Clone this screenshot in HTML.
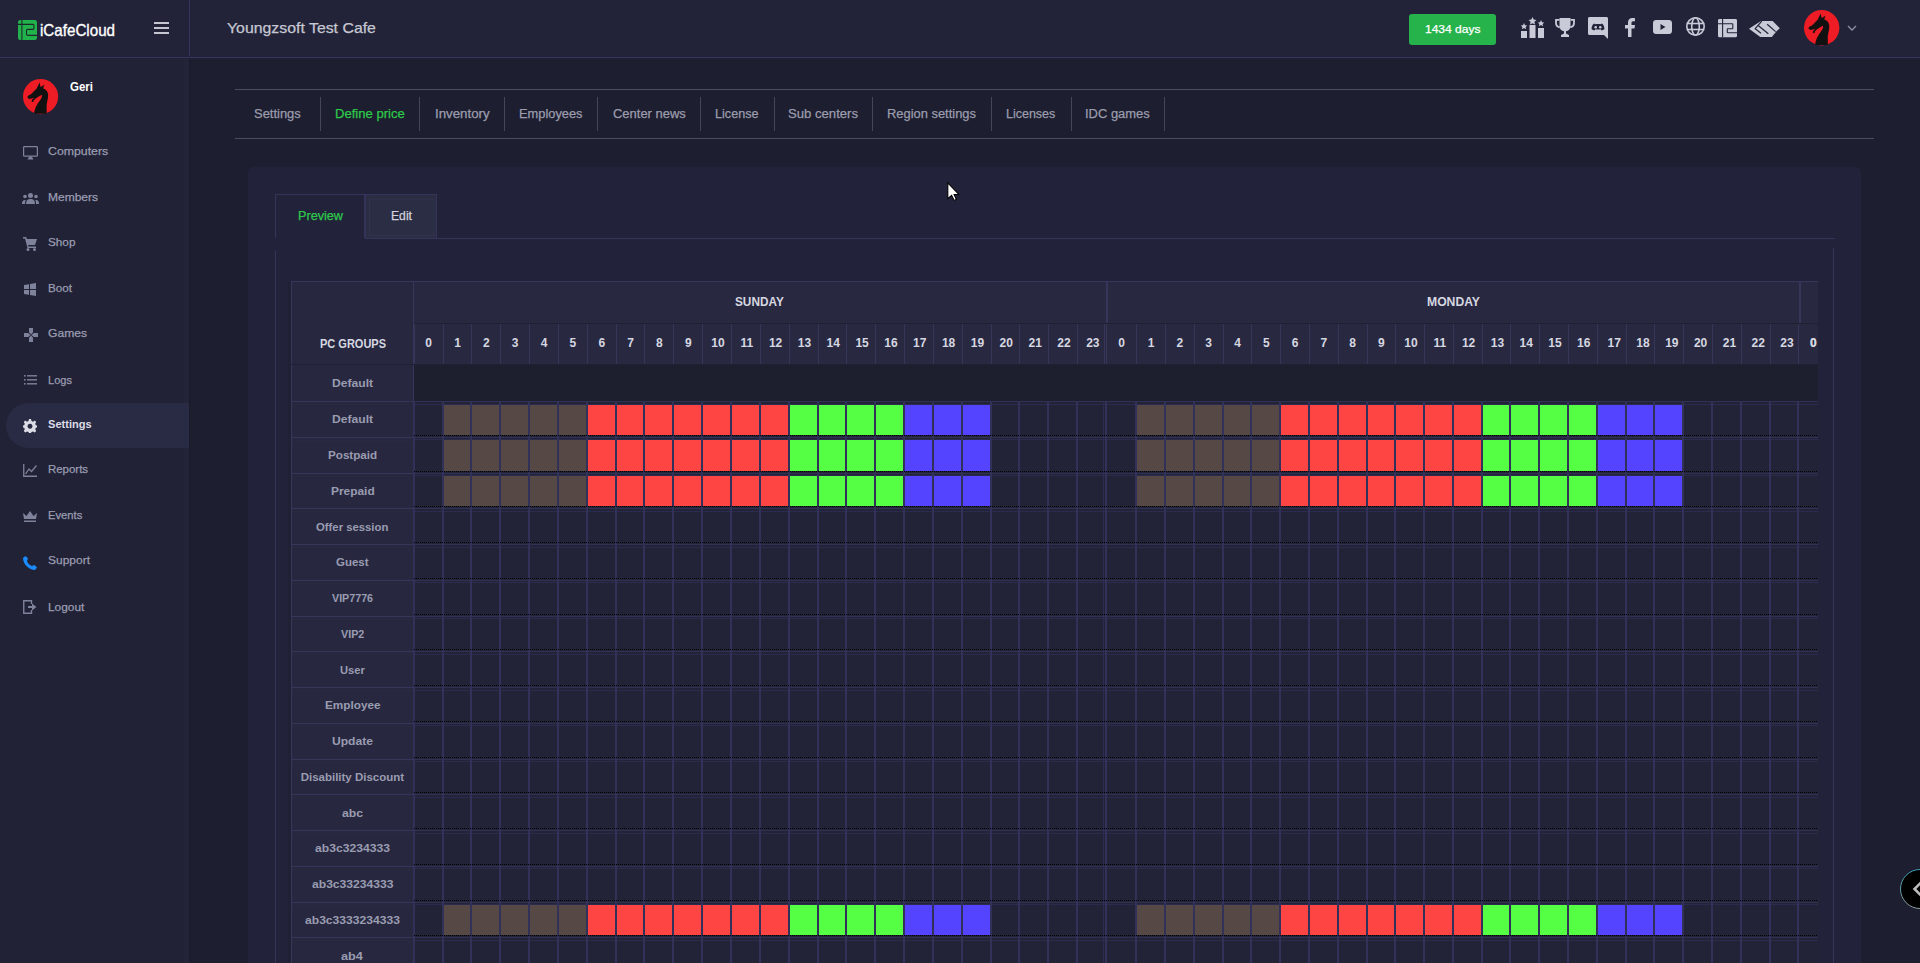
<!DOCTYPE html><html><head><meta charset="utf-8"><title>iCafeCloud</title><style>
html,body{margin:0;padding:0}
body{width:1920px;height:963px;overflow:hidden;background:#1d1e2f;position:relative;font-family:"Liberation Sans",sans-serif}
.t{position:absolute;white-space:nowrap;transform-origin:0 0}
.s{-webkit-text-stroke:0.25px currentColor}
.r{position:absolute}
svg{position:absolute;overflow:visible}
</style></head><body>
<div class="r" style="left:0px;top:58px;width:189px;height:905px;background:#212236;"></div>
<div class="r" style="left:184px;top:58px;width:5px;height:905px;background:#232437;"></div>
<div class="r" style="left:189px;top:58px;width:3px;height:905px;background:linear-gradient(90deg,#1a1b2a,#1d1e2f);"></div>
<svg style="left:23.299999999999997px;top:78.80000000000001px" width="35.2" height="35.2" viewBox="0 0 35 35"><circle cx="17.5" cy="17.5" r="17.5" fill="#ee1c24"/>
<path fill="#111" d="M16.5 3.5 L17.5 8 L21.3 5.6 L20 9.1 C22.6 10 24.6 12 25 15.5 C25.3 19 23.8 22.5 23.5 26 C23.3 29 23.9 32 23.4 34.6 L11 34.6 C11.3 30 13.5 25.5 16.8 21.3 C18.4 19.3 19.2 17.5 18.8 15.6 L15.6 17.4 L12.6 19.4 L10.5 21.4 L10.4 23 L8.6 22.6 L8.9 20.7 L11.3 18.6 L8.6 19.4 L6.2 19.8 L4.5 18.6 L4.8 16.9 L8.2 15 L11.1 12 L13.6 9.4 Z"/></svg>
<div class="t" style="left:70.00px;top:79.57px;font-size:13.5px;line-height:13.5px;font-weight:bold;color:#ffffff;transform:scaleX(0.8519);">Geri</div>
<div class="r" style="left:6px;top:403px;width:183px;height:45px;background:#292a44;border-radius:23px 0 0 23px"></div>
<div class="t s" style="left:48.00px;top:146.07px;font-size:11.5px;line-height:11.5px;font-weight:normal;color:#9a9cb1;transform:scaleX(1.0705);">Computers</div>
<div class="t s" style="left:48.00px;top:192.07px;font-size:11.5px;line-height:11.5px;font-weight:normal;color:#9a9cb1;transform:scaleX(1.0426);">Members</div>
<div class="t s" style="left:48.00px;top:237.07px;font-size:11.5px;line-height:11.5px;font-weight:normal;color:#9a9cb1;transform:scaleX(1.0204);">Shop</div>
<div class="t s" style="left:48.00px;top:283.07px;font-size:11.5px;line-height:11.5px;font-weight:normal;color:#9a9cb1;transform:scaleX(1.0156);">Boot</div>
<div class="t s" style="left:48.00px;top:328.07px;font-size:11.5px;line-height:11.5px;font-weight:normal;color:#9a9cb1;transform:scaleX(1.0516);">Games</div>
<div class="t s" style="left:48.00px;top:374.87px;font-size:11.5px;line-height:11.5px;font-weight:normal;color:#9a9cb1;transform:scaleX(0.9617);">Logs</div>
<div class="t" style="left:48.00px;top:419.37px;font-size:11.5px;line-height:11.5px;font-weight:bold;color:#dcdde6;transform:scaleX(0.9632);">Settings</div>
<div class="t s" style="left:48.00px;top:464.47px;font-size:11.5px;line-height:11.5px;font-weight:normal;color:#9a9cb1;transform:scaleX(0.9938);">Reports</div>
<div class="t s" style="left:48.00px;top:510.37px;font-size:11.5px;line-height:11.5px;font-weight:normal;color:#9a9cb1;transform:scaleX(0.9763);">Events</div>
<div class="t s" style="left:48.00px;top:555.47px;font-size:11.5px;line-height:11.5px;font-weight:normal;color:#9a9cb1;transform:scaleX(1.0420);">Support</div>
<div class="t s" style="left:48.00px;top:601.67px;font-size:11.5px;line-height:11.5px;font-weight:normal;color:#9a9cb1;transform:scaleX(1.0315);">Logout</div>
<svg style="left:23px;top:146px" width="15" height="14" viewBox="0 0 15 14" fill="#7f829b"><rect x="0.6" y="0.6" width="13.8" height="9.6" rx="0.8" fill="none" stroke="#7f829b" stroke-width="1.2"/><path d="M6.3 10.5 L8.7 10.5 L10.5 13.5 L4.5 13.5Z"/></svg>
<svg style="left:22px;top:193px" width="17" height="11" viewBox="0 0 17 11" fill="#7f829b"><circle cx="8.5" cy="2.5" r="2.5"/><circle cx="3" cy="3.5" r="1.8"/><circle cx="14" cy="3.5" r="1.8"/><path d="M4 11 C4 7 6 6 8.5 6 C11 6 13 7 13 11Z"/><path d="M0 11 C0 8 1 7 3 7 L4 7 C3 8 3 9 3 11Z"/><path d="M17 11 C17 8 16 7 14 7 L13 7 C14 8 14 9 14 11Z"/></svg>
<svg style="left:23px;top:237px" width="14" height="14" viewBox="0 0 14 14" fill="#7f829b"><path d="M0 0 L3 0 L4 2 L14 2 L12 8 L5 8 L5.5 9.5 L13 9.5 L13 11 L4.5 11 L2 1.5 L0 1.5Z"/><circle cx="5" cy="12.5" r="1.5"/><circle cx="11.5" cy="12.5" r="1.5"/></svg>
<svg style="left:24px;top:283px" width="12" height="13" viewBox="0 0 12 13" fill="#7f829b"><path d="M0 2 L5 1.2 L5 6 L0 6Z M6 1 L12 0 L12 6 L6 6Z M0 7 L5 7 L5 11.8 L0 11Z M6 7 L12 7 L12 13 L6 12Z"/></svg>
<svg style="left:23.6px;top:328px" width="14" height="14" viewBox="0 0 14 14" fill="#7f829b"><path d="M5 0 H9 V4.2 L7 6.6 L5 4.2Z M14 5 V9 H9.8 L7.4 7 L9.8 5Z M0 5 H4.2 L6.6 7 L4.2 9 H0Z M5 14 V9.8 L7 7.4 L9 9.8 V14Z"/></svg>
<svg style="left:24px;top:375px" width="13" height="10" viewBox="0 0 13 10" fill="#7f829b"><rect x="0" y="0" width="1.6" height="1.6"/><rect x="3" y="0.1" width="10" height="1.4"/><rect x="0" y="4" width="1.6" height="1.6"/><rect x="3" y="4.1" width="10" height="1.4"/><rect x="0" y="8" width="1.6" height="1.6"/><rect x="3" y="8.1" width="10" height="1.4"/></svg>
<svg style="left:23px;top:419px" width="14" height="14" viewBox="0 0 14 14" fill="#dcdde6"><path fill-rule="evenodd" d="M6 0 L8 0 L8.5 2 L10 2.7 L11.8 1.6 L13.2 3 L12.2 4.8 L12.8 6.2 L14 6.5 L14 8.5 L12.8 8.8 L12.2 10.2 L13.2 12 L11.8 13.4 L10 12.4 L8.5 13 L8 14 L6 14 L5.5 13 L4 12.4 L2.2 13.4 L0.8 12 L1.8 10.2 L1.2 8.8 L0 8.5 L0 6.5 L1.2 6.2 L1.8 4.8 L0.8 3 L2.2 1.6 L4 2.7 L5.5 2Z M7 4.8 A2.5 2.5 0 1 0 7.01 4.8Z"/></svg>
<svg style="left:23px;top:464px" width="14" height="13" viewBox="0 0 14 13" fill="#7f829b"><path d="M0.75 0 L0.75 12.25 L14 12.25" fill="none" stroke="#7f829b" stroke-width="1.3"/><path d="M2.5 10 L6 5 L8.5 7.5 L13.5 1.5" fill="none" stroke="#7f829b" stroke-width="1.3"/></svg>
<svg style="left:23px;top:511px" width="14" height="12" viewBox="0 0 14 12" fill="#7f829b"><path d="M0 2 L3.5 5 L7 0 L10.5 5 L14 2 L13 8 L1 8Z"/><rect x="1" y="9.5" width="12" height="1.5"/></svg>
<svg style="left:23px;top:556px" width="14" height="14" viewBox="0 0 14 14" fill="#1a8cff"><path d="M2.5 0 L5 2.5 L4 5 C4.5 7 6.5 9.5 9 10 L11.5 9 L14 11.5 L12 14 C6 14 0 8 0 2Z"/></svg>
<svg style="left:23px;top:600px" width="14" height="14" viewBox="0 0 14 14" fill="#7f829b"><path d="M8.5 4 L8.5 0.75 L0.75 0.75 L0.75 13.25 L8.5 13.25 L8.5 10" fill="none" stroke="#7f829b" stroke-width="1.4"/><path d="M5 6 L9 6 L9 3.5 L13.5 7 L9 10.5 L9 8 L5 8Z"/></svg>
<div class="r" style="left:0px;top:0px;width:1920px;height:57px;background:#222338;"></div>
<div class="r" style="left:0px;top:57px;width:1920px;height:1px;background:#35345a;"></div>
<div class="r" style="left:189px;top:0px;width:1px;height:56px;background:#363560;"></div>
<div class="r" style="left:0px;top:58px;width:1920px;height:1px;background:#1f2031;"></div>
<div class="r" style="left:0px;top:59px;width:189px;height:1px;background:#24243b;"></div>
<div class="r" style="left:189px;top:59px;width:1731px;height:1px;background:#1e1e34;"></div>
<svg style="left:18px;top:20px" width="19" height="20" viewBox="0 0 19 20"><rect width="19" height="20" rx="2.2" fill="#22b24c"/>
<g fill="none" stroke="#1d2a2a" stroke-width="1.1"><line x1="3.9" y1="0" x2="3.9" y2="20"/><path d="M0 4.4 H15 Q16 4.4 16 5.6 V8.2 Q16 9.4 15 9.4 H9.6 Q8.5 9.4 8.5 10.6 V14.2 Q8.5 15.4 9.8 15.4 H19"/></g></svg>
<div class="t s" style="left:40.00px;top:22.03px;font-size:16.5px;line-height:16.5px;font-weight:normal;color:#ffffff;transform:scaleX(0.9192);-webkit-text-stroke:0.35px #fff;">iCafeCloud</div>
<div class="r" style="left:154px;top:22px;width:15px;height:2px;background:#c4c5d0;"></div>
<div class="r" style="left:154px;top:27px;width:15px;height:2px;background:#c4c5d0;"></div>
<div class="r" style="left:154px;top:32px;width:15px;height:2px;background:#c4c5d0;"></div>
<div class="t s" style="left:226.60px;top:19.56px;font-size:15.4px;line-height:15.4px;font-weight:normal;color:#c6c7d2;transform:scaleX(1.0298);">Youngzsoft Test Cafe</div>
<div class="r" style="left:1409px;top:14px;width:87px;height:31px;background:#26b34b;border-radius:3px"></div>
<div class="t s" style="left:1424.50px;top:24.43px;font-size:11.3px;line-height:11.3px;font-weight:normal;color:#ffffff;transform:scaleX(1.0642);">1434 days</div>
<svg style="left:1521px;top:17px" width="23" height="21" viewBox="0 0 23 21" fill="#c9cad8"><rect x="0" y="14" width="6" height="7"/><rect x="8.5" y="8" width="6" height="13"/><rect x="17" y="11" width="6" height="10"/><path d="M11.5 0 L12.7 2.6 L15.5 2.9 L13.4 4.8 L14 7.6 L11.5 6.2 L9 7.6 L9.6 4.8 L7.5 2.9 L10.3 2.6Z"/><path d="M3 6 L4 8.2 L6.3 8.4 L4.6 10 L5.1 12.3 L3 11.1 L0.9 12.3 L1.4 10 L-0.3 8.4 L2 8.2Z"/><path d="M20 3 L21 5.2 L23.3 5.4 L21.6 7 L22.1 9.3 L20 8.1 L17.9 9.3 L18.4 7 L16.7 5.4 L19 5.2Z"/></svg>
<svg style="left:1555px;top:18px" width="20" height="19" viewBox="0 0 20 19" fill="#c9cad8"><path d="M4.5 0 L15.5 0 L15.5 8 C15.5 11 13.5 13 11 13.3 L11 15.5 L14 17 L14 19 L6 19 L6 17 L9 15.5 L9 13.3 C6.5 13 4.5 11 4.5 8Z"/><path d="M4.5 1.8 L1 1.8 L1 5 C1 7.5 3 9 4.8 9.3" fill="none" stroke="#c9cad8" stroke-width="1.8"/><path d="M15.5 1.8 L19 1.8 L19 5 C19 7.5 17 9 15.2 9.3" fill="none" stroke="#c9cad8" stroke-width="1.8"/></svg>
<svg style="left:1588px;top:17px" width="20" height="22" viewBox="0 0 20 22" fill="#c9cad8"><path fill-rule="evenodd" d="M1.5 0 L18.5 0 C19.3 0 20 0.7 20 1.5 L20 22 L16 18 L1.5 18 C0.7 18 0 17.3 0 16.5 L0 1.5 C0 0.7 0.7 0 1.5 0Z M6.5 6.5 C5 7 4 8 3.5 12 C4.5 13 6 13.5 6.7 13.3 L7.3 12.3 C8.5 12.7 11.5 12.7 12.7 12.3 L13.3 13.3 C14 13.5 15.5 13 16.5 12 C16 8 15 7 13.5 6.5 L13 7.2 C11 6.8 9 6.8 7 7.2Z"/><circle cx="7.7" cy="10.2" r="1.3" fill="#c9cad8"/><circle cx="12.3" cy="10.2" r="1.3" fill="#c9cad8"/></svg>
<svg style="left:1625px;top:18px" width="10" height="19" viewBox="0 0 10 19" fill="#c9cad8"><path d="M6.5 19 L6.5 10.5 L9.5 10.5 L10 7 L6.5 7 L6.5 5 C6.5 4 7 3.3 8.3 3.3 L10 3.3 L10 0.2 C9.5 0.1 8.5 0 7.3 0 C4.7 0 3 1.6 3 4.4 L3 7 L0 7 L0 10.5 L3 10.5 L3 19Z"/></svg>
<svg style="left:1653px;top:20px" width="19" height="14" viewBox="0 0 19 14" fill="#c9cad8"><path fill-rule="evenodd" d="M3 0 L16 0 C17.7 0 19 1.3 19 3 L19 11 C19 12.7 17.7 14 16 14 L3 14 C1.3 14 0 12.7 0 11 L0 3 C0 1.3 1.3 0 3 0Z M7.5 4 L7.5 10 L12.5 7Z"/></svg>
<svg style="left:1686px;top:17px" width="19" height="19" viewBox="0 0 19 19" fill="#c9cad8"><g fill="none" stroke="#c9cad8" stroke-width="1.6"><circle cx="9.5" cy="9.5" r="8.7"/><ellipse cx="9.5" cy="9.5" rx="3.8" ry="8.7"/><line x1="0.8" y1="6.5" x2="18.2" y2="6.5"/><line x1="0.8" y1="12.5" x2="18.2" y2="12.5"/></g></svg>
<svg style="left:1718px;top:19px" width="19" height="18.3" viewBox="0 0 19 18.3"><rect width="19" height="18.3" rx="1.5" fill="#c9cad8"/>
<g fill="none" stroke="#222338" stroke-width="1.1"><line x1="4.6" y1="0" x2="4.6" y2="18.3"/><path d="M0 4.8 H14.3 Q14.8 4.8 14.8 5.4 V9.2 Q14.8 9.7 14.2 9.7 H9.8 Q9.3 9.7 9.3 10.3 V13.2 Q9.3 13.7 9.9 13.7 H19"/></g></svg>
<svg style="left:1749px;top:20.5px" width="31" height="16" viewBox="0 0 31 16"><path d="M0 7.7 L12 0 L23.7 0 L30.8 7.3 L27.5 10.3 L22.8 16 L11.3 16 Z" fill="#c9cad8"/>
<g fill="none" stroke="#222338" stroke-width="1.2"><path d="M12.8 0.2 L6.2 7.6 L12 12.3"/><path d="M9.2 4.5 L19.3 12.7"/><path d="M18.2 3.2 L26.6 10.6"/></g></svg>
<svg style="left:1804.3px;top:9.600000000000001px" width="35.4" height="35.4" viewBox="0 0 35 35"><circle cx="17.5" cy="17.5" r="17.5" fill="#ee1c24"/>
<path fill="#111" d="M16.5 3.5 L17.5 8 L21.3 5.6 L20 9.1 C22.6 10 24.6 12 25 15.5 C25.3 19 23.8 22.5 23.5 26 C23.3 29 23.9 32 23.4 34.6 L11 34.6 C11.3 30 13.5 25.5 16.8 21.3 C18.4 19.3 19.2 17.5 18.8 15.6 L15.6 17.4 L12.6 19.4 L10.5 21.4 L10.4 23 L8.6 22.6 L8.9 20.7 L11.3 18.6 L8.6 19.4 L6.2 19.8 L4.5 18.6 L4.8 16.9 L8.2 15 L11.1 12 L13.6 9.4 Z"/></svg>
<svg style="left:1847px;top:25px" width="10" height="6" viewBox="0 0 10 6"><path d="M1 1 L5 5 L9 1" fill="none" stroke="#8d90a6" stroke-width="1.3"/></svg>
<div class="r" style="left:235px;top:89px;width:1639px;height:1px;background:#4b4c60;"></div>
<div class="r" style="left:235px;top:138px;width:1639px;height:1px;background:#4b4c60;"></div>
<div class="t s" style="left:253.50px;top:108.02px;font-size:12.5px;line-height:12.5px;font-weight:normal;color:#9b9cad;transform:scaleX(1.0357);">Settings</div>
<div class="t s" style="left:334.70px;top:108.02px;font-size:12.5px;line-height:12.5px;font-weight:normal;color:#2fc84b;transform:scaleX(1.0452);">Define price</div>
<div class="t s" style="left:434.70px;top:108.02px;font-size:12.5px;line-height:12.5px;font-weight:normal;color:#9b9cad;transform:scaleX(1.0634);">Inventory</div>
<div class="t s" style="left:519.00px;top:108.02px;font-size:12.5px;line-height:12.5px;font-weight:normal;color:#9b9cad;transform:scaleX(1.0273);">Employees</div>
<div class="t s" style="left:612.80px;top:108.02px;font-size:12.5px;line-height:12.5px;font-weight:normal;color:#9b9cad;transform:scaleX(1.0372);">Center news</div>
<div class="t s" style="left:715.30px;top:108.02px;font-size:12.5px;line-height:12.5px;font-weight:normal;color:#9b9cad;transform:scaleX(1.0102);">License</div>
<div class="t s" style="left:788.00px;top:108.02px;font-size:12.5px;line-height:12.5px;font-weight:normal;color:#9b9cad;transform:scaleX(1.0497);">Sub centers</div>
<div class="t s" style="left:887.20px;top:108.02px;font-size:12.5px;line-height:12.5px;font-weight:normal;color:#9b9cad;transform:scaleX(1.0326);">Region settings</div>
<div class="t s" style="left:1006.00px;top:108.02px;font-size:12.5px;line-height:12.5px;font-weight:normal;color:#9b9cad;transform:scaleX(0.9997);">Licenses</div>
<div class="t s" style="left:1085.00px;top:108.02px;font-size:12.5px;line-height:12.5px;font-weight:normal;color:#9b9cad;transform:scaleX(1.0352);">IDC games</div>
<div class="r" style="left:320px;top:97px;width:1px;height:34px;background:#45465a;"></div>
<div class="r" style="left:419px;top:97px;width:1px;height:34px;background:#45465a;"></div>
<div class="r" style="left:504px;top:97px;width:1px;height:34px;background:#45465a;"></div>
<div class="r" style="left:597px;top:97px;width:1px;height:34px;background:#45465a;"></div>
<div class="r" style="left:700px;top:97px;width:1px;height:34px;background:#45465a;"></div>
<div class="r" style="left:774px;top:97px;width:1px;height:34px;background:#45465a;"></div>
<div class="r" style="left:872px;top:97px;width:1px;height:34px;background:#45465a;"></div>
<div class="r" style="left:991px;top:97px;width:1px;height:34px;background:#45465a;"></div>
<div class="r" style="left:1071px;top:97px;width:1px;height:34px;background:#45465a;"></div>
<div class="r" style="left:1164px;top:97px;width:1px;height:34px;background:#45465a;"></div>
<div class="r" style="left:248px;top:167px;width:1613px;height:800px;background:#22233a;border-radius:5px"></div>
<div class="r" style="left:275px;top:194px;width:90px;height:44px;background:#22233a;box-sizing:border-box;border:1px solid #34345a;border-bottom:none"></div>
<div class="r" style="left:365px;top:194px;width:72px;height:45px;background:#2a2d43;box-sizing:border-box;border:1px solid #34345a"></div>
<div class="r" style="left:437px;top:238px;width:1398px;height:1px;background:#34345a;"></div>
<div class="r" style="left:369px;top:199px;width:65px;height:37px;background:transparent;box-sizing:border-box;border:1px solid #2f3249"></div>
<div class="t s" style="left:298.00px;top:209.00px;font-size:13px;line-height:13px;font-weight:normal;color:#2fc84b;transform:scaleX(0.9723);">Preview</div>
<div class="t s" style="left:391.00px;top:209.00px;font-size:13px;line-height:13px;font-weight:normal;color:#d2d3dc;transform:scaleX(0.9365);">Edit</div>
<div class="r" style="left:275px;top:251px;width:1px;height:712px;background:#34345a;"></div>
<div class="r" style="left:1833px;top:248px;width:1px;height:715px;background:#34345a;"></div>
<div style="position:absolute;left:0;top:0;width:1818px;height:963px;overflow:hidden">
<div class="r" style="left:288px;top:281px;width:3px;height:682px;background:#202134;"></div>
<div class="r" style="left:291px;top:281px;width:122px;height:682px;background:#272840;"></div>
<div class="r" style="left:413px;top:281px;width:1405px;height:83px;background:#282940;"></div>
<div class="r" style="left:291px;top:281px;width:1527px;height:1px;background:#36365a;"></div>
<div class="r" style="left:291px;top:281px;width:1px;height:682px;background:#36365a;"></div>
<div class="r" style="left:413px;top:281px;width:1px;height:682px;background:#36365a;"></div>
<div class="r" style="left:1106px;top:281px;width:2px;height:42px;background:#36365a;"></div>
<div class="r" style="left:1799px;top:281px;width:2px;height:42px;background:#36365a;"></div>
<div class="r" style="left:414px;top:323px;width:1404px;height:1px;background:#1f2031;"></div>
<div class="t" style="left:735.02px;top:295.64px;font-size:12px;line-height:12px;font-weight:bold;color:#d6d7e0;transform:scaleX(0.9837);">SUNDAY</div>
<div class="t" style="left:1426.50px;top:295.64px;font-size:12px;line-height:12px;font-weight:bold;color:#d6d7e0;transform:scaleX(1.0142);">MONDAY</div>
<div class="t" style="left:319.60px;top:338.14px;font-size:12px;line-height:12px;font-weight:bold;color:#d6d7e0;transform:scaleX(0.9167);">PC GROUPS</div>
<div class="r" style="left:414px;top:324px;width:1px;height:40px;background:#36365a;"></div>
<div class="r" style="left:443px;top:324px;width:1px;height:40px;background:#36365a;"></div>
<div class="r" style="left:471px;top:324px;width:1px;height:40px;background:#36365a;"></div>
<div class="r" style="left:500px;top:324px;width:1px;height:40px;background:#36365a;"></div>
<div class="r" style="left:529px;top:324px;width:1px;height:40px;background:#36365a;"></div>
<div class="r" style="left:558px;top:324px;width:1px;height:40px;background:#36365a;"></div>
<div class="r" style="left:587px;top:324px;width:1px;height:40px;background:#36365a;"></div>
<div class="r" style="left:616px;top:324px;width:1px;height:40px;background:#36365a;"></div>
<div class="r" style="left:644px;top:324px;width:1px;height:40px;background:#36365a;"></div>
<div class="r" style="left:673px;top:324px;width:1px;height:40px;background:#36365a;"></div>
<div class="r" style="left:702px;top:324px;width:1px;height:40px;background:#36365a;"></div>
<div class="r" style="left:731px;top:324px;width:1px;height:40px;background:#36365a;"></div>
<div class="r" style="left:760px;top:324px;width:1px;height:40px;background:#36365a;"></div>
<div class="r" style="left:789px;top:324px;width:1px;height:40px;background:#36365a;"></div>
<div class="r" style="left:818px;top:324px;width:1px;height:40px;background:#36365a;"></div>
<div class="r" style="left:846px;top:324px;width:1px;height:40px;background:#36365a;"></div>
<div class="r" style="left:875px;top:324px;width:1px;height:40px;background:#36365a;"></div>
<div class="r" style="left:904px;top:324px;width:1px;height:40px;background:#36365a;"></div>
<div class="r" style="left:933px;top:324px;width:1px;height:40px;background:#36365a;"></div>
<div class="r" style="left:962px;top:324px;width:1px;height:40px;background:#36365a;"></div>
<div class="r" style="left:991px;top:324px;width:1px;height:40px;background:#36365a;"></div>
<div class="r" style="left:1019px;top:324px;width:1px;height:40px;background:#36365a;"></div>
<div class="r" style="left:1048px;top:324px;width:1px;height:40px;background:#36365a;"></div>
<div class="r" style="left:1077px;top:324px;width:1px;height:40px;background:#36365a;"></div>
<div class="r" style="left:1106px;top:324px;width:1px;height:40px;background:#36365a;"></div>
<div class="r" style="left:1136px;top:324px;width:1px;height:40px;background:#36365a;"></div>
<div class="r" style="left:1165px;top:324px;width:1px;height:40px;background:#36365a;"></div>
<div class="r" style="left:1194px;top:324px;width:1px;height:40px;background:#36365a;"></div>
<div class="r" style="left:1223px;top:324px;width:1px;height:40px;background:#36365a;"></div>
<div class="r" style="left:1251px;top:324px;width:1px;height:40px;background:#36365a;"></div>
<div class="r" style="left:1280px;top:324px;width:1px;height:40px;background:#36365a;"></div>
<div class="r" style="left:1309px;top:324px;width:1px;height:40px;background:#36365a;"></div>
<div class="r" style="left:1338px;top:324px;width:1px;height:40px;background:#36365a;"></div>
<div class="r" style="left:1367px;top:324px;width:1px;height:40px;background:#36365a;"></div>
<div class="r" style="left:1395px;top:324px;width:1px;height:40px;background:#36365a;"></div>
<div class="r" style="left:1424px;top:324px;width:1px;height:40px;background:#36365a;"></div>
<div class="r" style="left:1453px;top:324px;width:1px;height:40px;background:#36365a;"></div>
<div class="r" style="left:1482px;top:324px;width:1px;height:40px;background:#36365a;"></div>
<div class="r" style="left:1510px;top:324px;width:1px;height:40px;background:#36365a;"></div>
<div class="r" style="left:1539px;top:324px;width:1px;height:40px;background:#36365a;"></div>
<div class="r" style="left:1568px;top:324px;width:1px;height:40px;background:#36365a;"></div>
<div class="r" style="left:1597px;top:324px;width:1px;height:40px;background:#36365a;"></div>
<div class="r" style="left:1626px;top:324px;width:1px;height:40px;background:#36365a;"></div>
<div class="r" style="left:1654px;top:324px;width:1px;height:40px;background:#36365a;"></div>
<div class="r" style="left:1683px;top:324px;width:1px;height:40px;background:#36365a;"></div>
<div class="r" style="left:1712px;top:324px;width:1px;height:40px;background:#36365a;"></div>
<div class="r" style="left:1741px;top:324px;width:1px;height:40px;background:#36365a;"></div>
<div class="r" style="left:1770px;top:324px;width:1px;height:40px;background:#36365a;"></div>
<div class="r" style="left:1798px;top:324px;width:1px;height:40px;background:#36365a;"></div>
<div class="r" style="left:1827px;top:324px;width:1px;height:40px;background:#36365a;"></div>
<div class="r" style="left:1104px;top:324px;width:1px;height:40px;background:#36365a;"></div>
<div class="t" style="left:425.22px;top:336.84px;font-size:12px;line-height:12px;font-weight:bold;color:#d6d7e0;transform:scaleX(1.0000);">0</div>
<div class="t" style="left:454.19px;top:336.84px;font-size:12px;line-height:12px;font-weight:bold;color:#d6d7e0;transform:scaleX(1.0000);">1</div>
<div class="t" style="left:483.03px;top:336.84px;font-size:12px;line-height:12px;font-weight:bold;color:#d6d7e0;transform:scaleX(1.0000);">2</div>
<div class="t" style="left:511.87px;top:336.84px;font-size:12px;line-height:12px;font-weight:bold;color:#d6d7e0;transform:scaleX(1.0000);">3</div>
<div class="t" style="left:540.71px;top:336.84px;font-size:12px;line-height:12px;font-weight:bold;color:#d6d7e0;transform:scaleX(1.0000);">4</div>
<div class="t" style="left:569.55px;top:336.84px;font-size:12px;line-height:12px;font-weight:bold;color:#d6d7e0;transform:scaleX(1.0000);">5</div>
<div class="t" style="left:598.39px;top:336.84px;font-size:12px;line-height:12px;font-weight:bold;color:#d6d7e0;transform:scaleX(1.0000);">6</div>
<div class="t" style="left:627.23px;top:336.84px;font-size:12px;line-height:12px;font-weight:bold;color:#d6d7e0;transform:scaleX(1.0000);">7</div>
<div class="t" style="left:656.07px;top:336.84px;font-size:12px;line-height:12px;font-weight:bold;color:#d6d7e0;transform:scaleX(1.0000);">8</div>
<div class="t" style="left:684.91px;top:336.84px;font-size:12px;line-height:12px;font-weight:bold;color:#d6d7e0;transform:scaleX(1.0000);">9</div>
<div class="t" style="left:711.22px;top:336.84px;font-size:12px;line-height:12px;font-weight:bold;color:#d6d7e0;transform:scaleX(1.0000);">10</div>
<div class="t" style="left:740.39px;top:336.84px;font-size:12px;line-height:12px;font-weight:bold;color:#d6d7e0;transform:scaleX(1.0000);">11</div>
<div class="t" style="left:768.90px;top:336.84px;font-size:12px;line-height:12px;font-weight:bold;color:#d6d7e0;transform:scaleX(1.0000);">12</div>
<div class="t" style="left:797.74px;top:336.84px;font-size:12px;line-height:12px;font-weight:bold;color:#d6d7e0;transform:scaleX(1.0000);">13</div>
<div class="t" style="left:826.58px;top:336.84px;font-size:12px;line-height:12px;font-weight:bold;color:#d6d7e0;transform:scaleX(1.0000);">14</div>
<div class="t" style="left:855.42px;top:336.84px;font-size:12px;line-height:12px;font-weight:bold;color:#d6d7e0;transform:scaleX(1.0000);">15</div>
<div class="t" style="left:884.26px;top:336.84px;font-size:12px;line-height:12px;font-weight:bold;color:#d6d7e0;transform:scaleX(1.0000);">16</div>
<div class="t" style="left:913.10px;top:336.84px;font-size:12px;line-height:12px;font-weight:bold;color:#d6d7e0;transform:scaleX(1.0000);">17</div>
<div class="t" style="left:941.94px;top:336.84px;font-size:12px;line-height:12px;font-weight:bold;color:#d6d7e0;transform:scaleX(1.0000);">18</div>
<div class="t" style="left:970.78px;top:336.84px;font-size:12px;line-height:12px;font-weight:bold;color:#d6d7e0;transform:scaleX(1.0000);">19</div>
<div class="t" style="left:999.62px;top:336.84px;font-size:12px;line-height:12px;font-weight:bold;color:#d6d7e0;transform:scaleX(1.0000);">20</div>
<div class="t" style="left:1028.46px;top:336.84px;font-size:12px;line-height:12px;font-weight:bold;color:#d6d7e0;transform:scaleX(1.0000);">21</div>
<div class="t" style="left:1057.30px;top:336.84px;font-size:12px;line-height:12px;font-weight:bold;color:#d6d7e0;transform:scaleX(1.0000);">22</div>
<div class="t" style="left:1086.14px;top:336.84px;font-size:12px;line-height:12px;font-weight:bold;color:#d6d7e0;transform:scaleX(1.0000);">23</div>
<div class="t" style="left:1118.23px;top:336.84px;font-size:12px;line-height:12px;font-weight:bold;color:#d6d7e0;transform:scaleX(1.0000);">0</div>
<div class="t" style="left:1147.77px;top:336.84px;font-size:12px;line-height:12px;font-weight:bold;color:#d6d7e0;transform:scaleX(1.0000);">1</div>
<div class="t" style="left:1176.56px;top:336.84px;font-size:12px;line-height:12px;font-weight:bold;color:#d6d7e0;transform:scaleX(1.0000);">2</div>
<div class="t" style="left:1205.35px;top:336.84px;font-size:12px;line-height:12px;font-weight:bold;color:#d6d7e0;transform:scaleX(1.0000);">3</div>
<div class="t" style="left:1234.14px;top:336.84px;font-size:12px;line-height:12px;font-weight:bold;color:#d6d7e0;transform:scaleX(1.0000);">4</div>
<div class="t" style="left:1262.93px;top:336.84px;font-size:12px;line-height:12px;font-weight:bold;color:#d6d7e0;transform:scaleX(1.0000);">5</div>
<div class="t" style="left:1291.72px;top:336.84px;font-size:12px;line-height:12px;font-weight:bold;color:#d6d7e0;transform:scaleX(1.0000);">6</div>
<div class="t" style="left:1320.51px;top:336.84px;font-size:12px;line-height:12px;font-weight:bold;color:#d6d7e0;transform:scaleX(1.0000);">7</div>
<div class="t" style="left:1349.30px;top:336.84px;font-size:12px;line-height:12px;font-weight:bold;color:#d6d7e0;transform:scaleX(1.0000);">8</div>
<div class="t" style="left:1378.09px;top:336.84px;font-size:12px;line-height:12px;font-weight:bold;color:#d6d7e0;transform:scaleX(1.0000);">9</div>
<div class="t" style="left:1404.34px;top:336.84px;font-size:12px;line-height:12px;font-weight:bold;color:#d6d7e0;transform:scaleX(1.0000);">10</div>
<div class="t" style="left:1433.46px;top:336.84px;font-size:12px;line-height:12px;font-weight:bold;color:#d6d7e0;transform:scaleX(1.0000);">11</div>
<div class="t" style="left:1461.92px;top:336.84px;font-size:12px;line-height:12px;font-weight:bold;color:#d6d7e0;transform:scaleX(1.0000);">12</div>
<div class="t" style="left:1490.71px;top:336.84px;font-size:12px;line-height:12px;font-weight:bold;color:#d6d7e0;transform:scaleX(1.0000);">13</div>
<div class="t" style="left:1519.50px;top:336.84px;font-size:12px;line-height:12px;font-weight:bold;color:#d6d7e0;transform:scaleX(1.0000);">14</div>
<div class="t" style="left:1548.29px;top:336.84px;font-size:12px;line-height:12px;font-weight:bold;color:#d6d7e0;transform:scaleX(1.0000);">15</div>
<div class="t" style="left:1577.09px;top:336.84px;font-size:12px;line-height:12px;font-weight:bold;color:#d6d7e0;transform:scaleX(1.0000);">16</div>
<div class="t" style="left:1607.58px;top:336.84px;font-size:12px;line-height:12px;font-weight:bold;color:#d6d7e0;transform:scaleX(1.0000);">17</div>
<div class="t" style="left:1636.37px;top:336.84px;font-size:12px;line-height:12px;font-weight:bold;color:#d6d7e0;transform:scaleX(1.0000);">18</div>
<div class="t" style="left:1665.15px;top:336.84px;font-size:12px;line-height:12px;font-weight:bold;color:#d6d7e0;transform:scaleX(1.0000);">19</div>
<div class="t" style="left:1693.94px;top:336.84px;font-size:12px;line-height:12px;font-weight:bold;color:#d6d7e0;transform:scaleX(1.0000);">20</div>
<div class="t" style="left:1722.73px;top:336.84px;font-size:12px;line-height:12px;font-weight:bold;color:#d6d7e0;transform:scaleX(1.0000);">21</div>
<div class="t" style="left:1751.52px;top:336.84px;font-size:12px;line-height:12px;font-weight:bold;color:#d6d7e0;transform:scaleX(1.0000);">22</div>
<div class="t" style="left:1780.31px;top:336.84px;font-size:12px;line-height:12px;font-weight:bold;color:#d6d7e0;transform:scaleX(1.0000);">23</div>
<div class="t" style="left:1809.93px;top:336.84px;font-size:12px;line-height:12px;font-weight:bold;color:#d6d7e0;transform:scaleX(1.0000);">0</div>
<div class="t" style="left:1809.94px;top:336.84px;font-size:12px;line-height:12px;font-weight:bold;color:#d6d7e0;transform:scaleX(1.0000);">0</div>
<div class="r" style="left:291px;top:364px;width:1527px;height:1px;background:#1f2031;"></div>
<div class="r" style="left:414px;top:365px;width:1404px;height:37px;background:#1e1f2e;"></div>
<div class="t" style="left:331.85px;top:378.07px;font-size:11.5px;line-height:11.5px;font-weight:bold;color:#9a9cb0;transform:scaleX(1.0543);">Default</div>
<div class="r" style="left:291px;top:401px;width:122px;height:1px;background:#36365a;"></div>
<div class="r" style="left:292px;top:404px;width:121px;height:1px;background:#29293f;"></div>
<div class="r" style="left:414px;top:401px;width:1404px;height:1px;background:#313156;"></div>
<div class="t" style="left:331.85px;top:414.27px;font-size:11.5px;line-height:11.5px;font-weight:bold;color:#9a9cb0;transform:scaleX(1.0543);">Default</div>
<div class="r" style="left:414px;top:402px;width:1404px;height:35px;background:#222337;"></div>
<div class="r" style="left:414px;top:404px;width:1404px;height:1px;background:#2b2b4d;"></div>
<div class="r" style="left:413px;top:402px;width:2px;height:35px;background:#31315a;"></div>
<div class="r" style="left:442px;top:402px;width:2px;height:35px;background:#31315a;"></div>
<div class="r" style="left:470px;top:402px;width:2px;height:35px;background:#31315a;"></div>
<div class="r" style="left:499px;top:402px;width:2px;height:35px;background:#31315a;"></div>
<div class="r" style="left:528px;top:402px;width:2px;height:35px;background:#31315a;"></div>
<div class="r" style="left:557px;top:402px;width:2px;height:35px;background:#31315a;"></div>
<div class="r" style="left:586px;top:402px;width:2px;height:35px;background:#31315a;"></div>
<div class="r" style="left:615px;top:402px;width:2px;height:35px;background:#31315a;"></div>
<div class="r" style="left:643px;top:402px;width:2px;height:35px;background:#31315a;"></div>
<div class="r" style="left:672px;top:402px;width:2px;height:35px;background:#31315a;"></div>
<div class="r" style="left:701px;top:402px;width:2px;height:35px;background:#31315a;"></div>
<div class="r" style="left:730px;top:402px;width:2px;height:35px;background:#31315a;"></div>
<div class="r" style="left:759px;top:402px;width:2px;height:35px;background:#31315a;"></div>
<div class="r" style="left:788px;top:402px;width:2px;height:35px;background:#31315a;"></div>
<div class="r" style="left:817px;top:402px;width:2px;height:35px;background:#31315a;"></div>
<div class="r" style="left:845px;top:402px;width:2px;height:35px;background:#31315a;"></div>
<div class="r" style="left:874px;top:402px;width:2px;height:35px;background:#31315a;"></div>
<div class="r" style="left:903px;top:402px;width:2px;height:35px;background:#31315a;"></div>
<div class="r" style="left:932px;top:402px;width:2px;height:35px;background:#31315a;"></div>
<div class="r" style="left:961px;top:402px;width:2px;height:35px;background:#31315a;"></div>
<div class="r" style="left:990px;top:402px;width:2px;height:35px;background:#31315a;"></div>
<div class="r" style="left:1018px;top:402px;width:2px;height:35px;background:#31315a;"></div>
<div class="r" style="left:1047px;top:402px;width:2px;height:35px;background:#31315a;"></div>
<div class="r" style="left:1076px;top:402px;width:2px;height:35px;background:#31315a;"></div>
<div class="r" style="left:1105px;top:402px;width:2px;height:35px;background:#31315a;"></div>
<div class="r" style="left:1135px;top:402px;width:2px;height:35px;background:#31315a;"></div>
<div class="r" style="left:1164px;top:402px;width:2px;height:35px;background:#31315a;"></div>
<div class="r" style="left:1193px;top:402px;width:2px;height:35px;background:#31315a;"></div>
<div class="r" style="left:1222px;top:402px;width:2px;height:35px;background:#31315a;"></div>
<div class="r" style="left:1250px;top:402px;width:2px;height:35px;background:#31315a;"></div>
<div class="r" style="left:1279px;top:402px;width:2px;height:35px;background:#31315a;"></div>
<div class="r" style="left:1308px;top:402px;width:2px;height:35px;background:#31315a;"></div>
<div class="r" style="left:1337px;top:402px;width:2px;height:35px;background:#31315a;"></div>
<div class="r" style="left:1366px;top:402px;width:2px;height:35px;background:#31315a;"></div>
<div class="r" style="left:1394px;top:402px;width:2px;height:35px;background:#31315a;"></div>
<div class="r" style="left:1423px;top:402px;width:2px;height:35px;background:#31315a;"></div>
<div class="r" style="left:1452px;top:402px;width:2px;height:35px;background:#31315a;"></div>
<div class="r" style="left:1481px;top:402px;width:2px;height:35px;background:#31315a;"></div>
<div class="r" style="left:1509px;top:402px;width:2px;height:35px;background:#31315a;"></div>
<div class="r" style="left:1538px;top:402px;width:2px;height:35px;background:#31315a;"></div>
<div class="r" style="left:1567px;top:402px;width:2px;height:35px;background:#31315a;"></div>
<div class="r" style="left:1596px;top:402px;width:2px;height:35px;background:#31315a;"></div>
<div class="r" style="left:1625px;top:402px;width:2px;height:35px;background:#31315a;"></div>
<div class="r" style="left:1653px;top:402px;width:2px;height:35px;background:#31315a;"></div>
<div class="r" style="left:1682px;top:402px;width:2px;height:35px;background:#31315a;"></div>
<div class="r" style="left:1711px;top:402px;width:2px;height:35px;background:#31315a;"></div>
<div class="r" style="left:1740px;top:402px;width:2px;height:35px;background:#31315a;"></div>
<div class="r" style="left:1769px;top:402px;width:2px;height:35px;background:#31315a;"></div>
<div class="r" style="left:1797px;top:402px;width:2px;height:35px;background:#31315a;"></div>
<div class="r" style="left:1826px;top:402px;width:2px;height:35px;background:#31315a;"></div>
<div class="r" style="left:1103px;top:402px;width:1px;height:35px;background:#2c2c52;"></div>
<div class="r" style="left:444px;top:405px;width:26px;height:30px;background:#554845;"></div>
<div class="r" style="left:472px;top:405px;width:27px;height:30px;background:#554845;"></div>
<div class="r" style="left:501px;top:405px;width:27px;height:30px;background:#554845;"></div>
<div class="r" style="left:530px;top:405px;width:27px;height:30px;background:#554845;"></div>
<div class="r" style="left:559px;top:405px;width:27px;height:30px;background:#554845;"></div>
<div class="r" style="left:588px;top:405px;width:27px;height:30px;background:#ff4444;"></div>
<div class="r" style="left:617px;top:405px;width:26px;height:30px;background:#ff4444;"></div>
<div class="r" style="left:645px;top:405px;width:27px;height:30px;background:#ff4444;"></div>
<div class="r" style="left:674px;top:405px;width:27px;height:30px;background:#ff4444;"></div>
<div class="r" style="left:703px;top:405px;width:27px;height:30px;background:#ff4444;"></div>
<div class="r" style="left:732px;top:405px;width:27px;height:30px;background:#ff4444;"></div>
<div class="r" style="left:761px;top:405px;width:27px;height:30px;background:#ff4444;"></div>
<div class="r" style="left:790px;top:405px;width:27px;height:30px;background:#55ff44;"></div>
<div class="r" style="left:819px;top:405px;width:26px;height:30px;background:#55ff44;"></div>
<div class="r" style="left:847px;top:405px;width:27px;height:30px;background:#55ff44;"></div>
<div class="r" style="left:876px;top:405px;width:27px;height:30px;background:#55ff44;"></div>
<div class="r" style="left:905px;top:405px;width:27px;height:30px;background:#5544ff;"></div>
<div class="r" style="left:934px;top:405px;width:27px;height:30px;background:#5544ff;"></div>
<div class="r" style="left:963px;top:405px;width:27px;height:30px;background:#5544ff;"></div>
<div class="r" style="left:1137px;top:405px;width:27px;height:30px;background:#554845;"></div>
<div class="r" style="left:1166px;top:405px;width:27px;height:30px;background:#554845;"></div>
<div class="r" style="left:1195px;top:405px;width:27px;height:30px;background:#554845;"></div>
<div class="r" style="left:1224px;top:405px;width:26px;height:30px;background:#554845;"></div>
<div class="r" style="left:1252px;top:405px;width:27px;height:30px;background:#554845;"></div>
<div class="r" style="left:1281px;top:405px;width:27px;height:30px;background:#ff4444;"></div>
<div class="r" style="left:1310px;top:405px;width:27px;height:30px;background:#ff4444;"></div>
<div class="r" style="left:1339px;top:405px;width:27px;height:30px;background:#ff4444;"></div>
<div class="r" style="left:1368px;top:405px;width:26px;height:30px;background:#ff4444;"></div>
<div class="r" style="left:1396px;top:405px;width:27px;height:30px;background:#ff4444;"></div>
<div class="r" style="left:1425px;top:405px;width:27px;height:30px;background:#ff4444;"></div>
<div class="r" style="left:1454px;top:405px;width:27px;height:30px;background:#ff4444;"></div>
<div class="r" style="left:1483px;top:405px;width:26px;height:30px;background:#55ff44;"></div>
<div class="r" style="left:1511px;top:405px;width:27px;height:30px;background:#55ff44;"></div>
<div class="r" style="left:1540px;top:405px;width:27px;height:30px;background:#55ff44;"></div>
<div class="r" style="left:1569px;top:405px;width:27px;height:30px;background:#55ff44;"></div>
<div class="r" style="left:1598px;top:405px;width:27px;height:30px;background:#5544ff;"></div>
<div class="r" style="left:1627px;top:405px;width:26px;height:30px;background:#5544ff;"></div>
<div class="r" style="left:1655px;top:405px;width:27px;height:30px;background:#5544ff;"></div>
<div class="r" style="left:414px;top:435px;width:1404px;height:1px;background:repeating-linear-gradient(90deg,#000 0 1px,transparent 1px 2px);"></div>
<div class="r" style="left:291px;top:437px;width:122px;height:1px;background:#36365a;"></div>
<div class="r" style="left:292px;top:440px;width:121px;height:1px;background:#29293f;"></div>
<div class="r" style="left:414px;top:437px;width:1404px;height:1px;background:#313156;"></div>
<div class="t" style="left:327.80px;top:450.02px;font-size:11.5px;line-height:11.5px;font-weight:bold;color:#9a9cb0;transform:scaleX(1.0126);">Postpaid</div>
<div class="r" style="left:414px;top:438px;width:1404px;height:35px;background:#222337;"></div>
<div class="r" style="left:414px;top:439px;width:1404px;height:1px;background:#2b2b4d;"></div>
<div class="r" style="left:413px;top:438px;width:2px;height:35px;background:#31315a;"></div>
<div class="r" style="left:442px;top:438px;width:2px;height:35px;background:#31315a;"></div>
<div class="r" style="left:470px;top:438px;width:2px;height:35px;background:#31315a;"></div>
<div class="r" style="left:499px;top:438px;width:2px;height:35px;background:#31315a;"></div>
<div class="r" style="left:528px;top:438px;width:2px;height:35px;background:#31315a;"></div>
<div class="r" style="left:557px;top:438px;width:2px;height:35px;background:#31315a;"></div>
<div class="r" style="left:586px;top:438px;width:2px;height:35px;background:#31315a;"></div>
<div class="r" style="left:615px;top:438px;width:2px;height:35px;background:#31315a;"></div>
<div class="r" style="left:643px;top:438px;width:2px;height:35px;background:#31315a;"></div>
<div class="r" style="left:672px;top:438px;width:2px;height:35px;background:#31315a;"></div>
<div class="r" style="left:701px;top:438px;width:2px;height:35px;background:#31315a;"></div>
<div class="r" style="left:730px;top:438px;width:2px;height:35px;background:#31315a;"></div>
<div class="r" style="left:759px;top:438px;width:2px;height:35px;background:#31315a;"></div>
<div class="r" style="left:788px;top:438px;width:2px;height:35px;background:#31315a;"></div>
<div class="r" style="left:817px;top:438px;width:2px;height:35px;background:#31315a;"></div>
<div class="r" style="left:845px;top:438px;width:2px;height:35px;background:#31315a;"></div>
<div class="r" style="left:874px;top:438px;width:2px;height:35px;background:#31315a;"></div>
<div class="r" style="left:903px;top:438px;width:2px;height:35px;background:#31315a;"></div>
<div class="r" style="left:932px;top:438px;width:2px;height:35px;background:#31315a;"></div>
<div class="r" style="left:961px;top:438px;width:2px;height:35px;background:#31315a;"></div>
<div class="r" style="left:990px;top:438px;width:2px;height:35px;background:#31315a;"></div>
<div class="r" style="left:1018px;top:438px;width:2px;height:35px;background:#31315a;"></div>
<div class="r" style="left:1047px;top:438px;width:2px;height:35px;background:#31315a;"></div>
<div class="r" style="left:1076px;top:438px;width:2px;height:35px;background:#31315a;"></div>
<div class="r" style="left:1105px;top:438px;width:2px;height:35px;background:#31315a;"></div>
<div class="r" style="left:1135px;top:438px;width:2px;height:35px;background:#31315a;"></div>
<div class="r" style="left:1164px;top:438px;width:2px;height:35px;background:#31315a;"></div>
<div class="r" style="left:1193px;top:438px;width:2px;height:35px;background:#31315a;"></div>
<div class="r" style="left:1222px;top:438px;width:2px;height:35px;background:#31315a;"></div>
<div class="r" style="left:1250px;top:438px;width:2px;height:35px;background:#31315a;"></div>
<div class="r" style="left:1279px;top:438px;width:2px;height:35px;background:#31315a;"></div>
<div class="r" style="left:1308px;top:438px;width:2px;height:35px;background:#31315a;"></div>
<div class="r" style="left:1337px;top:438px;width:2px;height:35px;background:#31315a;"></div>
<div class="r" style="left:1366px;top:438px;width:2px;height:35px;background:#31315a;"></div>
<div class="r" style="left:1394px;top:438px;width:2px;height:35px;background:#31315a;"></div>
<div class="r" style="left:1423px;top:438px;width:2px;height:35px;background:#31315a;"></div>
<div class="r" style="left:1452px;top:438px;width:2px;height:35px;background:#31315a;"></div>
<div class="r" style="left:1481px;top:438px;width:2px;height:35px;background:#31315a;"></div>
<div class="r" style="left:1509px;top:438px;width:2px;height:35px;background:#31315a;"></div>
<div class="r" style="left:1538px;top:438px;width:2px;height:35px;background:#31315a;"></div>
<div class="r" style="left:1567px;top:438px;width:2px;height:35px;background:#31315a;"></div>
<div class="r" style="left:1596px;top:438px;width:2px;height:35px;background:#31315a;"></div>
<div class="r" style="left:1625px;top:438px;width:2px;height:35px;background:#31315a;"></div>
<div class="r" style="left:1653px;top:438px;width:2px;height:35px;background:#31315a;"></div>
<div class="r" style="left:1682px;top:438px;width:2px;height:35px;background:#31315a;"></div>
<div class="r" style="left:1711px;top:438px;width:2px;height:35px;background:#31315a;"></div>
<div class="r" style="left:1740px;top:438px;width:2px;height:35px;background:#31315a;"></div>
<div class="r" style="left:1769px;top:438px;width:2px;height:35px;background:#31315a;"></div>
<div class="r" style="left:1797px;top:438px;width:2px;height:35px;background:#31315a;"></div>
<div class="r" style="left:1826px;top:438px;width:2px;height:35px;background:#31315a;"></div>
<div class="r" style="left:1103px;top:438px;width:1px;height:35px;background:#2c2c52;"></div>
<div class="r" style="left:444px;top:440px;width:26px;height:31px;background:#554845;"></div>
<div class="r" style="left:472px;top:440px;width:27px;height:31px;background:#554845;"></div>
<div class="r" style="left:501px;top:440px;width:27px;height:31px;background:#554845;"></div>
<div class="r" style="left:530px;top:440px;width:27px;height:31px;background:#554845;"></div>
<div class="r" style="left:559px;top:440px;width:27px;height:31px;background:#554845;"></div>
<div class="r" style="left:588px;top:440px;width:27px;height:31px;background:#ff4444;"></div>
<div class="r" style="left:617px;top:440px;width:26px;height:31px;background:#ff4444;"></div>
<div class="r" style="left:645px;top:440px;width:27px;height:31px;background:#ff4444;"></div>
<div class="r" style="left:674px;top:440px;width:27px;height:31px;background:#ff4444;"></div>
<div class="r" style="left:703px;top:440px;width:27px;height:31px;background:#ff4444;"></div>
<div class="r" style="left:732px;top:440px;width:27px;height:31px;background:#ff4444;"></div>
<div class="r" style="left:761px;top:440px;width:27px;height:31px;background:#ff4444;"></div>
<div class="r" style="left:790px;top:440px;width:27px;height:31px;background:#55ff44;"></div>
<div class="r" style="left:819px;top:440px;width:26px;height:31px;background:#55ff44;"></div>
<div class="r" style="left:847px;top:440px;width:27px;height:31px;background:#55ff44;"></div>
<div class="r" style="left:876px;top:440px;width:27px;height:31px;background:#55ff44;"></div>
<div class="r" style="left:905px;top:440px;width:27px;height:31px;background:#5544ff;"></div>
<div class="r" style="left:934px;top:440px;width:27px;height:31px;background:#5544ff;"></div>
<div class="r" style="left:963px;top:440px;width:27px;height:31px;background:#5544ff;"></div>
<div class="r" style="left:1137px;top:440px;width:27px;height:31px;background:#554845;"></div>
<div class="r" style="left:1166px;top:440px;width:27px;height:31px;background:#554845;"></div>
<div class="r" style="left:1195px;top:440px;width:27px;height:31px;background:#554845;"></div>
<div class="r" style="left:1224px;top:440px;width:26px;height:31px;background:#554845;"></div>
<div class="r" style="left:1252px;top:440px;width:27px;height:31px;background:#554845;"></div>
<div class="r" style="left:1281px;top:440px;width:27px;height:31px;background:#ff4444;"></div>
<div class="r" style="left:1310px;top:440px;width:27px;height:31px;background:#ff4444;"></div>
<div class="r" style="left:1339px;top:440px;width:27px;height:31px;background:#ff4444;"></div>
<div class="r" style="left:1368px;top:440px;width:26px;height:31px;background:#ff4444;"></div>
<div class="r" style="left:1396px;top:440px;width:27px;height:31px;background:#ff4444;"></div>
<div class="r" style="left:1425px;top:440px;width:27px;height:31px;background:#ff4444;"></div>
<div class="r" style="left:1454px;top:440px;width:27px;height:31px;background:#ff4444;"></div>
<div class="r" style="left:1483px;top:440px;width:26px;height:31px;background:#55ff44;"></div>
<div class="r" style="left:1511px;top:440px;width:27px;height:31px;background:#55ff44;"></div>
<div class="r" style="left:1540px;top:440px;width:27px;height:31px;background:#55ff44;"></div>
<div class="r" style="left:1569px;top:440px;width:27px;height:31px;background:#55ff44;"></div>
<div class="r" style="left:1598px;top:440px;width:27px;height:31px;background:#5544ff;"></div>
<div class="r" style="left:1627px;top:440px;width:26px;height:31px;background:#5544ff;"></div>
<div class="r" style="left:1655px;top:440px;width:27px;height:31px;background:#5544ff;"></div>
<div class="r" style="left:414px;top:471px;width:1404px;height:1px;background:repeating-linear-gradient(90deg,#000 0 1px,transparent 1px 2px);"></div>
<div class="r" style="left:291px;top:473px;width:122px;height:1px;background:#36365a;"></div>
<div class="r" style="left:292px;top:476px;width:121px;height:1px;background:#29293f;"></div>
<div class="r" style="left:414px;top:473px;width:1404px;height:1px;background:#313156;"></div>
<div class="t" style="left:330.55px;top:485.77px;font-size:11.5px;line-height:11.5px;font-weight:bold;color:#9a9cb0;transform:scaleX(1.0354);">Prepaid</div>
<div class="r" style="left:414px;top:474px;width:1404px;height:34px;background:#222337;"></div>
<div class="r" style="left:414px;top:475px;width:1404px;height:1px;background:#2b2b4d;"></div>
<div class="r" style="left:413px;top:474px;width:2px;height:34px;background:#31315a;"></div>
<div class="r" style="left:442px;top:474px;width:2px;height:34px;background:#31315a;"></div>
<div class="r" style="left:470px;top:474px;width:2px;height:34px;background:#31315a;"></div>
<div class="r" style="left:499px;top:474px;width:2px;height:34px;background:#31315a;"></div>
<div class="r" style="left:528px;top:474px;width:2px;height:34px;background:#31315a;"></div>
<div class="r" style="left:557px;top:474px;width:2px;height:34px;background:#31315a;"></div>
<div class="r" style="left:586px;top:474px;width:2px;height:34px;background:#31315a;"></div>
<div class="r" style="left:615px;top:474px;width:2px;height:34px;background:#31315a;"></div>
<div class="r" style="left:643px;top:474px;width:2px;height:34px;background:#31315a;"></div>
<div class="r" style="left:672px;top:474px;width:2px;height:34px;background:#31315a;"></div>
<div class="r" style="left:701px;top:474px;width:2px;height:34px;background:#31315a;"></div>
<div class="r" style="left:730px;top:474px;width:2px;height:34px;background:#31315a;"></div>
<div class="r" style="left:759px;top:474px;width:2px;height:34px;background:#31315a;"></div>
<div class="r" style="left:788px;top:474px;width:2px;height:34px;background:#31315a;"></div>
<div class="r" style="left:817px;top:474px;width:2px;height:34px;background:#31315a;"></div>
<div class="r" style="left:845px;top:474px;width:2px;height:34px;background:#31315a;"></div>
<div class="r" style="left:874px;top:474px;width:2px;height:34px;background:#31315a;"></div>
<div class="r" style="left:903px;top:474px;width:2px;height:34px;background:#31315a;"></div>
<div class="r" style="left:932px;top:474px;width:2px;height:34px;background:#31315a;"></div>
<div class="r" style="left:961px;top:474px;width:2px;height:34px;background:#31315a;"></div>
<div class="r" style="left:990px;top:474px;width:2px;height:34px;background:#31315a;"></div>
<div class="r" style="left:1018px;top:474px;width:2px;height:34px;background:#31315a;"></div>
<div class="r" style="left:1047px;top:474px;width:2px;height:34px;background:#31315a;"></div>
<div class="r" style="left:1076px;top:474px;width:2px;height:34px;background:#31315a;"></div>
<div class="r" style="left:1105px;top:474px;width:2px;height:34px;background:#31315a;"></div>
<div class="r" style="left:1135px;top:474px;width:2px;height:34px;background:#31315a;"></div>
<div class="r" style="left:1164px;top:474px;width:2px;height:34px;background:#31315a;"></div>
<div class="r" style="left:1193px;top:474px;width:2px;height:34px;background:#31315a;"></div>
<div class="r" style="left:1222px;top:474px;width:2px;height:34px;background:#31315a;"></div>
<div class="r" style="left:1250px;top:474px;width:2px;height:34px;background:#31315a;"></div>
<div class="r" style="left:1279px;top:474px;width:2px;height:34px;background:#31315a;"></div>
<div class="r" style="left:1308px;top:474px;width:2px;height:34px;background:#31315a;"></div>
<div class="r" style="left:1337px;top:474px;width:2px;height:34px;background:#31315a;"></div>
<div class="r" style="left:1366px;top:474px;width:2px;height:34px;background:#31315a;"></div>
<div class="r" style="left:1394px;top:474px;width:2px;height:34px;background:#31315a;"></div>
<div class="r" style="left:1423px;top:474px;width:2px;height:34px;background:#31315a;"></div>
<div class="r" style="left:1452px;top:474px;width:2px;height:34px;background:#31315a;"></div>
<div class="r" style="left:1481px;top:474px;width:2px;height:34px;background:#31315a;"></div>
<div class="r" style="left:1509px;top:474px;width:2px;height:34px;background:#31315a;"></div>
<div class="r" style="left:1538px;top:474px;width:2px;height:34px;background:#31315a;"></div>
<div class="r" style="left:1567px;top:474px;width:2px;height:34px;background:#31315a;"></div>
<div class="r" style="left:1596px;top:474px;width:2px;height:34px;background:#31315a;"></div>
<div class="r" style="left:1625px;top:474px;width:2px;height:34px;background:#31315a;"></div>
<div class="r" style="left:1653px;top:474px;width:2px;height:34px;background:#31315a;"></div>
<div class="r" style="left:1682px;top:474px;width:2px;height:34px;background:#31315a;"></div>
<div class="r" style="left:1711px;top:474px;width:2px;height:34px;background:#31315a;"></div>
<div class="r" style="left:1740px;top:474px;width:2px;height:34px;background:#31315a;"></div>
<div class="r" style="left:1769px;top:474px;width:2px;height:34px;background:#31315a;"></div>
<div class="r" style="left:1797px;top:474px;width:2px;height:34px;background:#31315a;"></div>
<div class="r" style="left:1826px;top:474px;width:2px;height:34px;background:#31315a;"></div>
<div class="r" style="left:1103px;top:474px;width:1px;height:34px;background:#2c2c52;"></div>
<div class="r" style="left:444px;top:476px;width:26px;height:30px;background:#554845;"></div>
<div class="r" style="left:472px;top:476px;width:27px;height:30px;background:#554845;"></div>
<div class="r" style="left:501px;top:476px;width:27px;height:30px;background:#554845;"></div>
<div class="r" style="left:530px;top:476px;width:27px;height:30px;background:#554845;"></div>
<div class="r" style="left:559px;top:476px;width:27px;height:30px;background:#554845;"></div>
<div class="r" style="left:588px;top:476px;width:27px;height:30px;background:#ff4444;"></div>
<div class="r" style="left:617px;top:476px;width:26px;height:30px;background:#ff4444;"></div>
<div class="r" style="left:645px;top:476px;width:27px;height:30px;background:#ff4444;"></div>
<div class="r" style="left:674px;top:476px;width:27px;height:30px;background:#ff4444;"></div>
<div class="r" style="left:703px;top:476px;width:27px;height:30px;background:#ff4444;"></div>
<div class="r" style="left:732px;top:476px;width:27px;height:30px;background:#ff4444;"></div>
<div class="r" style="left:761px;top:476px;width:27px;height:30px;background:#ff4444;"></div>
<div class="r" style="left:790px;top:476px;width:27px;height:30px;background:#55ff44;"></div>
<div class="r" style="left:819px;top:476px;width:26px;height:30px;background:#55ff44;"></div>
<div class="r" style="left:847px;top:476px;width:27px;height:30px;background:#55ff44;"></div>
<div class="r" style="left:876px;top:476px;width:27px;height:30px;background:#55ff44;"></div>
<div class="r" style="left:905px;top:476px;width:27px;height:30px;background:#5544ff;"></div>
<div class="r" style="left:934px;top:476px;width:27px;height:30px;background:#5544ff;"></div>
<div class="r" style="left:963px;top:476px;width:27px;height:30px;background:#5544ff;"></div>
<div class="r" style="left:1137px;top:476px;width:27px;height:30px;background:#554845;"></div>
<div class="r" style="left:1166px;top:476px;width:27px;height:30px;background:#554845;"></div>
<div class="r" style="left:1195px;top:476px;width:27px;height:30px;background:#554845;"></div>
<div class="r" style="left:1224px;top:476px;width:26px;height:30px;background:#554845;"></div>
<div class="r" style="left:1252px;top:476px;width:27px;height:30px;background:#554845;"></div>
<div class="r" style="left:1281px;top:476px;width:27px;height:30px;background:#ff4444;"></div>
<div class="r" style="left:1310px;top:476px;width:27px;height:30px;background:#ff4444;"></div>
<div class="r" style="left:1339px;top:476px;width:27px;height:30px;background:#ff4444;"></div>
<div class="r" style="left:1368px;top:476px;width:26px;height:30px;background:#ff4444;"></div>
<div class="r" style="left:1396px;top:476px;width:27px;height:30px;background:#ff4444;"></div>
<div class="r" style="left:1425px;top:476px;width:27px;height:30px;background:#ff4444;"></div>
<div class="r" style="left:1454px;top:476px;width:27px;height:30px;background:#ff4444;"></div>
<div class="r" style="left:1483px;top:476px;width:26px;height:30px;background:#55ff44;"></div>
<div class="r" style="left:1511px;top:476px;width:27px;height:30px;background:#55ff44;"></div>
<div class="r" style="left:1540px;top:476px;width:27px;height:30px;background:#55ff44;"></div>
<div class="r" style="left:1569px;top:476px;width:27px;height:30px;background:#55ff44;"></div>
<div class="r" style="left:1598px;top:476px;width:27px;height:30px;background:#5544ff;"></div>
<div class="r" style="left:1627px;top:476px;width:26px;height:30px;background:#5544ff;"></div>
<div class="r" style="left:1655px;top:476px;width:27px;height:30px;background:#5544ff;"></div>
<div class="r" style="left:414px;top:506px;width:1404px;height:1px;background:repeating-linear-gradient(90deg,#000 0 1px,transparent 1px 2px);"></div>
<div class="r" style="left:291px;top:508px;width:122px;height:1px;background:#36365a;"></div>
<div class="r" style="left:292px;top:511px;width:121px;height:1px;background:#29293f;"></div>
<div class="r" style="left:414px;top:508px;width:1404px;height:1px;background:#313156;"></div>
<div class="t" style="left:316.25px;top:521.52px;font-size:11.5px;line-height:11.5px;font-weight:bold;color:#9a9cb0;transform:scaleX(0.9839);">Offer session</div>
<div class="r" style="left:414px;top:509px;width:1404px;height:35px;background:#222337;"></div>
<div class="r" style="left:414px;top:511px;width:1404px;height:1px;background:#2b2b4d;"></div>
<div class="r" style="left:413px;top:509px;width:2px;height:35px;background:#31315a;"></div>
<div class="r" style="left:442px;top:509px;width:2px;height:35px;background:#31315a;"></div>
<div class="r" style="left:470px;top:509px;width:2px;height:35px;background:#31315a;"></div>
<div class="r" style="left:499px;top:509px;width:2px;height:35px;background:#31315a;"></div>
<div class="r" style="left:528px;top:509px;width:2px;height:35px;background:#31315a;"></div>
<div class="r" style="left:557px;top:509px;width:2px;height:35px;background:#31315a;"></div>
<div class="r" style="left:586px;top:509px;width:2px;height:35px;background:#31315a;"></div>
<div class="r" style="left:615px;top:509px;width:2px;height:35px;background:#31315a;"></div>
<div class="r" style="left:643px;top:509px;width:2px;height:35px;background:#31315a;"></div>
<div class="r" style="left:672px;top:509px;width:2px;height:35px;background:#31315a;"></div>
<div class="r" style="left:701px;top:509px;width:2px;height:35px;background:#31315a;"></div>
<div class="r" style="left:730px;top:509px;width:2px;height:35px;background:#31315a;"></div>
<div class="r" style="left:759px;top:509px;width:2px;height:35px;background:#31315a;"></div>
<div class="r" style="left:788px;top:509px;width:2px;height:35px;background:#31315a;"></div>
<div class="r" style="left:817px;top:509px;width:2px;height:35px;background:#31315a;"></div>
<div class="r" style="left:845px;top:509px;width:2px;height:35px;background:#31315a;"></div>
<div class="r" style="left:874px;top:509px;width:2px;height:35px;background:#31315a;"></div>
<div class="r" style="left:903px;top:509px;width:2px;height:35px;background:#31315a;"></div>
<div class="r" style="left:932px;top:509px;width:2px;height:35px;background:#31315a;"></div>
<div class="r" style="left:961px;top:509px;width:2px;height:35px;background:#31315a;"></div>
<div class="r" style="left:990px;top:509px;width:2px;height:35px;background:#31315a;"></div>
<div class="r" style="left:1018px;top:509px;width:2px;height:35px;background:#31315a;"></div>
<div class="r" style="left:1047px;top:509px;width:2px;height:35px;background:#31315a;"></div>
<div class="r" style="left:1076px;top:509px;width:2px;height:35px;background:#31315a;"></div>
<div class="r" style="left:1105px;top:509px;width:2px;height:35px;background:#31315a;"></div>
<div class="r" style="left:1135px;top:509px;width:2px;height:35px;background:#31315a;"></div>
<div class="r" style="left:1164px;top:509px;width:2px;height:35px;background:#31315a;"></div>
<div class="r" style="left:1193px;top:509px;width:2px;height:35px;background:#31315a;"></div>
<div class="r" style="left:1222px;top:509px;width:2px;height:35px;background:#31315a;"></div>
<div class="r" style="left:1250px;top:509px;width:2px;height:35px;background:#31315a;"></div>
<div class="r" style="left:1279px;top:509px;width:2px;height:35px;background:#31315a;"></div>
<div class="r" style="left:1308px;top:509px;width:2px;height:35px;background:#31315a;"></div>
<div class="r" style="left:1337px;top:509px;width:2px;height:35px;background:#31315a;"></div>
<div class="r" style="left:1366px;top:509px;width:2px;height:35px;background:#31315a;"></div>
<div class="r" style="left:1394px;top:509px;width:2px;height:35px;background:#31315a;"></div>
<div class="r" style="left:1423px;top:509px;width:2px;height:35px;background:#31315a;"></div>
<div class="r" style="left:1452px;top:509px;width:2px;height:35px;background:#31315a;"></div>
<div class="r" style="left:1481px;top:509px;width:2px;height:35px;background:#31315a;"></div>
<div class="r" style="left:1509px;top:509px;width:2px;height:35px;background:#31315a;"></div>
<div class="r" style="left:1538px;top:509px;width:2px;height:35px;background:#31315a;"></div>
<div class="r" style="left:1567px;top:509px;width:2px;height:35px;background:#31315a;"></div>
<div class="r" style="left:1596px;top:509px;width:2px;height:35px;background:#31315a;"></div>
<div class="r" style="left:1625px;top:509px;width:2px;height:35px;background:#31315a;"></div>
<div class="r" style="left:1653px;top:509px;width:2px;height:35px;background:#31315a;"></div>
<div class="r" style="left:1682px;top:509px;width:2px;height:35px;background:#31315a;"></div>
<div class="r" style="left:1711px;top:509px;width:2px;height:35px;background:#31315a;"></div>
<div class="r" style="left:1740px;top:509px;width:2px;height:35px;background:#31315a;"></div>
<div class="r" style="left:1769px;top:509px;width:2px;height:35px;background:#31315a;"></div>
<div class="r" style="left:1797px;top:509px;width:2px;height:35px;background:#31315a;"></div>
<div class="r" style="left:1826px;top:509px;width:2px;height:35px;background:#31315a;"></div>
<div class="r" style="left:1103px;top:509px;width:1px;height:35px;background:#2c2c52;"></div>
<div class="r" style="left:414px;top:542px;width:1404px;height:1px;background:repeating-linear-gradient(90deg,#000 0 1px,transparent 1px 2px);"></div>
<div class="r" style="left:291px;top:544px;width:122px;height:1px;background:#36365a;"></div>
<div class="r" style="left:292px;top:547px;width:121px;height:1px;background:#29293f;"></div>
<div class="r" style="left:414px;top:544px;width:1404px;height:1px;background:#313156;"></div>
<div class="t" style="left:336.10px;top:557.27px;font-size:11.5px;line-height:11.5px;font-weight:bold;color:#9a9cb0;transform:scaleX(0.9999);">Guest</div>
<div class="r" style="left:414px;top:545px;width:1404px;height:35px;background:#222337;"></div>
<div class="r" style="left:414px;top:547px;width:1404px;height:1px;background:#2b2b4d;"></div>
<div class="r" style="left:413px;top:545px;width:2px;height:35px;background:#31315a;"></div>
<div class="r" style="left:442px;top:545px;width:2px;height:35px;background:#31315a;"></div>
<div class="r" style="left:470px;top:545px;width:2px;height:35px;background:#31315a;"></div>
<div class="r" style="left:499px;top:545px;width:2px;height:35px;background:#31315a;"></div>
<div class="r" style="left:528px;top:545px;width:2px;height:35px;background:#31315a;"></div>
<div class="r" style="left:557px;top:545px;width:2px;height:35px;background:#31315a;"></div>
<div class="r" style="left:586px;top:545px;width:2px;height:35px;background:#31315a;"></div>
<div class="r" style="left:615px;top:545px;width:2px;height:35px;background:#31315a;"></div>
<div class="r" style="left:643px;top:545px;width:2px;height:35px;background:#31315a;"></div>
<div class="r" style="left:672px;top:545px;width:2px;height:35px;background:#31315a;"></div>
<div class="r" style="left:701px;top:545px;width:2px;height:35px;background:#31315a;"></div>
<div class="r" style="left:730px;top:545px;width:2px;height:35px;background:#31315a;"></div>
<div class="r" style="left:759px;top:545px;width:2px;height:35px;background:#31315a;"></div>
<div class="r" style="left:788px;top:545px;width:2px;height:35px;background:#31315a;"></div>
<div class="r" style="left:817px;top:545px;width:2px;height:35px;background:#31315a;"></div>
<div class="r" style="left:845px;top:545px;width:2px;height:35px;background:#31315a;"></div>
<div class="r" style="left:874px;top:545px;width:2px;height:35px;background:#31315a;"></div>
<div class="r" style="left:903px;top:545px;width:2px;height:35px;background:#31315a;"></div>
<div class="r" style="left:932px;top:545px;width:2px;height:35px;background:#31315a;"></div>
<div class="r" style="left:961px;top:545px;width:2px;height:35px;background:#31315a;"></div>
<div class="r" style="left:990px;top:545px;width:2px;height:35px;background:#31315a;"></div>
<div class="r" style="left:1018px;top:545px;width:2px;height:35px;background:#31315a;"></div>
<div class="r" style="left:1047px;top:545px;width:2px;height:35px;background:#31315a;"></div>
<div class="r" style="left:1076px;top:545px;width:2px;height:35px;background:#31315a;"></div>
<div class="r" style="left:1105px;top:545px;width:2px;height:35px;background:#31315a;"></div>
<div class="r" style="left:1135px;top:545px;width:2px;height:35px;background:#31315a;"></div>
<div class="r" style="left:1164px;top:545px;width:2px;height:35px;background:#31315a;"></div>
<div class="r" style="left:1193px;top:545px;width:2px;height:35px;background:#31315a;"></div>
<div class="r" style="left:1222px;top:545px;width:2px;height:35px;background:#31315a;"></div>
<div class="r" style="left:1250px;top:545px;width:2px;height:35px;background:#31315a;"></div>
<div class="r" style="left:1279px;top:545px;width:2px;height:35px;background:#31315a;"></div>
<div class="r" style="left:1308px;top:545px;width:2px;height:35px;background:#31315a;"></div>
<div class="r" style="left:1337px;top:545px;width:2px;height:35px;background:#31315a;"></div>
<div class="r" style="left:1366px;top:545px;width:2px;height:35px;background:#31315a;"></div>
<div class="r" style="left:1394px;top:545px;width:2px;height:35px;background:#31315a;"></div>
<div class="r" style="left:1423px;top:545px;width:2px;height:35px;background:#31315a;"></div>
<div class="r" style="left:1452px;top:545px;width:2px;height:35px;background:#31315a;"></div>
<div class="r" style="left:1481px;top:545px;width:2px;height:35px;background:#31315a;"></div>
<div class="r" style="left:1509px;top:545px;width:2px;height:35px;background:#31315a;"></div>
<div class="r" style="left:1538px;top:545px;width:2px;height:35px;background:#31315a;"></div>
<div class="r" style="left:1567px;top:545px;width:2px;height:35px;background:#31315a;"></div>
<div class="r" style="left:1596px;top:545px;width:2px;height:35px;background:#31315a;"></div>
<div class="r" style="left:1625px;top:545px;width:2px;height:35px;background:#31315a;"></div>
<div class="r" style="left:1653px;top:545px;width:2px;height:35px;background:#31315a;"></div>
<div class="r" style="left:1682px;top:545px;width:2px;height:35px;background:#31315a;"></div>
<div class="r" style="left:1711px;top:545px;width:2px;height:35px;background:#31315a;"></div>
<div class="r" style="left:1740px;top:545px;width:2px;height:35px;background:#31315a;"></div>
<div class="r" style="left:1769px;top:545px;width:2px;height:35px;background:#31315a;"></div>
<div class="r" style="left:1797px;top:545px;width:2px;height:35px;background:#31315a;"></div>
<div class="r" style="left:1826px;top:545px;width:2px;height:35px;background:#31315a;"></div>
<div class="r" style="left:1103px;top:545px;width:1px;height:35px;background:#2c2c52;"></div>
<div class="r" style="left:414px;top:578px;width:1404px;height:1px;background:repeating-linear-gradient(90deg,#000 0 1px,transparent 1px 2px);"></div>
<div class="r" style="left:291px;top:580px;width:122px;height:1px;background:#36365a;"></div>
<div class="r" style="left:292px;top:583px;width:121px;height:1px;background:#29293f;"></div>
<div class="r" style="left:414px;top:580px;width:1404px;height:1px;background:#313156;"></div>
<div class="t" style="left:331.90px;top:593.02px;font-size:11.5px;line-height:11.5px;font-weight:bold;color:#9a9cb0;transform:scaleX(0.9297);">VIP7776</div>
<div class="r" style="left:414px;top:581px;width:1404px;height:35px;background:#222337;"></div>
<div class="r" style="left:414px;top:582px;width:1404px;height:1px;background:#2b2b4d;"></div>
<div class="r" style="left:413px;top:581px;width:2px;height:35px;background:#31315a;"></div>
<div class="r" style="left:442px;top:581px;width:2px;height:35px;background:#31315a;"></div>
<div class="r" style="left:470px;top:581px;width:2px;height:35px;background:#31315a;"></div>
<div class="r" style="left:499px;top:581px;width:2px;height:35px;background:#31315a;"></div>
<div class="r" style="left:528px;top:581px;width:2px;height:35px;background:#31315a;"></div>
<div class="r" style="left:557px;top:581px;width:2px;height:35px;background:#31315a;"></div>
<div class="r" style="left:586px;top:581px;width:2px;height:35px;background:#31315a;"></div>
<div class="r" style="left:615px;top:581px;width:2px;height:35px;background:#31315a;"></div>
<div class="r" style="left:643px;top:581px;width:2px;height:35px;background:#31315a;"></div>
<div class="r" style="left:672px;top:581px;width:2px;height:35px;background:#31315a;"></div>
<div class="r" style="left:701px;top:581px;width:2px;height:35px;background:#31315a;"></div>
<div class="r" style="left:730px;top:581px;width:2px;height:35px;background:#31315a;"></div>
<div class="r" style="left:759px;top:581px;width:2px;height:35px;background:#31315a;"></div>
<div class="r" style="left:788px;top:581px;width:2px;height:35px;background:#31315a;"></div>
<div class="r" style="left:817px;top:581px;width:2px;height:35px;background:#31315a;"></div>
<div class="r" style="left:845px;top:581px;width:2px;height:35px;background:#31315a;"></div>
<div class="r" style="left:874px;top:581px;width:2px;height:35px;background:#31315a;"></div>
<div class="r" style="left:903px;top:581px;width:2px;height:35px;background:#31315a;"></div>
<div class="r" style="left:932px;top:581px;width:2px;height:35px;background:#31315a;"></div>
<div class="r" style="left:961px;top:581px;width:2px;height:35px;background:#31315a;"></div>
<div class="r" style="left:990px;top:581px;width:2px;height:35px;background:#31315a;"></div>
<div class="r" style="left:1018px;top:581px;width:2px;height:35px;background:#31315a;"></div>
<div class="r" style="left:1047px;top:581px;width:2px;height:35px;background:#31315a;"></div>
<div class="r" style="left:1076px;top:581px;width:2px;height:35px;background:#31315a;"></div>
<div class="r" style="left:1105px;top:581px;width:2px;height:35px;background:#31315a;"></div>
<div class="r" style="left:1135px;top:581px;width:2px;height:35px;background:#31315a;"></div>
<div class="r" style="left:1164px;top:581px;width:2px;height:35px;background:#31315a;"></div>
<div class="r" style="left:1193px;top:581px;width:2px;height:35px;background:#31315a;"></div>
<div class="r" style="left:1222px;top:581px;width:2px;height:35px;background:#31315a;"></div>
<div class="r" style="left:1250px;top:581px;width:2px;height:35px;background:#31315a;"></div>
<div class="r" style="left:1279px;top:581px;width:2px;height:35px;background:#31315a;"></div>
<div class="r" style="left:1308px;top:581px;width:2px;height:35px;background:#31315a;"></div>
<div class="r" style="left:1337px;top:581px;width:2px;height:35px;background:#31315a;"></div>
<div class="r" style="left:1366px;top:581px;width:2px;height:35px;background:#31315a;"></div>
<div class="r" style="left:1394px;top:581px;width:2px;height:35px;background:#31315a;"></div>
<div class="r" style="left:1423px;top:581px;width:2px;height:35px;background:#31315a;"></div>
<div class="r" style="left:1452px;top:581px;width:2px;height:35px;background:#31315a;"></div>
<div class="r" style="left:1481px;top:581px;width:2px;height:35px;background:#31315a;"></div>
<div class="r" style="left:1509px;top:581px;width:2px;height:35px;background:#31315a;"></div>
<div class="r" style="left:1538px;top:581px;width:2px;height:35px;background:#31315a;"></div>
<div class="r" style="left:1567px;top:581px;width:2px;height:35px;background:#31315a;"></div>
<div class="r" style="left:1596px;top:581px;width:2px;height:35px;background:#31315a;"></div>
<div class="r" style="left:1625px;top:581px;width:2px;height:35px;background:#31315a;"></div>
<div class="r" style="left:1653px;top:581px;width:2px;height:35px;background:#31315a;"></div>
<div class="r" style="left:1682px;top:581px;width:2px;height:35px;background:#31315a;"></div>
<div class="r" style="left:1711px;top:581px;width:2px;height:35px;background:#31315a;"></div>
<div class="r" style="left:1740px;top:581px;width:2px;height:35px;background:#31315a;"></div>
<div class="r" style="left:1769px;top:581px;width:2px;height:35px;background:#31315a;"></div>
<div class="r" style="left:1797px;top:581px;width:2px;height:35px;background:#31315a;"></div>
<div class="r" style="left:1826px;top:581px;width:2px;height:35px;background:#31315a;"></div>
<div class="r" style="left:1103px;top:581px;width:1px;height:35px;background:#2c2c52;"></div>
<div class="r" style="left:414px;top:614px;width:1404px;height:1px;background:repeating-linear-gradient(90deg,#000 0 1px,transparent 1px 2px);"></div>
<div class="r" style="left:291px;top:616px;width:122px;height:1px;background:#36365a;"></div>
<div class="r" style="left:292px;top:619px;width:121px;height:1px;background:#29293f;"></div>
<div class="r" style="left:414px;top:616px;width:1404px;height:1px;background:#313156;"></div>
<div class="t" style="left:340.75px;top:628.77px;font-size:11.5px;line-height:11.5px;font-weight:bold;color:#9a9cb0;transform:scaleX(0.9337);">VIP2</div>
<div class="r" style="left:414px;top:617px;width:1404px;height:34px;background:#222337;"></div>
<div class="r" style="left:414px;top:618px;width:1404px;height:1px;background:#2b2b4d;"></div>
<div class="r" style="left:413px;top:617px;width:2px;height:34px;background:#31315a;"></div>
<div class="r" style="left:442px;top:617px;width:2px;height:34px;background:#31315a;"></div>
<div class="r" style="left:470px;top:617px;width:2px;height:34px;background:#31315a;"></div>
<div class="r" style="left:499px;top:617px;width:2px;height:34px;background:#31315a;"></div>
<div class="r" style="left:528px;top:617px;width:2px;height:34px;background:#31315a;"></div>
<div class="r" style="left:557px;top:617px;width:2px;height:34px;background:#31315a;"></div>
<div class="r" style="left:586px;top:617px;width:2px;height:34px;background:#31315a;"></div>
<div class="r" style="left:615px;top:617px;width:2px;height:34px;background:#31315a;"></div>
<div class="r" style="left:643px;top:617px;width:2px;height:34px;background:#31315a;"></div>
<div class="r" style="left:672px;top:617px;width:2px;height:34px;background:#31315a;"></div>
<div class="r" style="left:701px;top:617px;width:2px;height:34px;background:#31315a;"></div>
<div class="r" style="left:730px;top:617px;width:2px;height:34px;background:#31315a;"></div>
<div class="r" style="left:759px;top:617px;width:2px;height:34px;background:#31315a;"></div>
<div class="r" style="left:788px;top:617px;width:2px;height:34px;background:#31315a;"></div>
<div class="r" style="left:817px;top:617px;width:2px;height:34px;background:#31315a;"></div>
<div class="r" style="left:845px;top:617px;width:2px;height:34px;background:#31315a;"></div>
<div class="r" style="left:874px;top:617px;width:2px;height:34px;background:#31315a;"></div>
<div class="r" style="left:903px;top:617px;width:2px;height:34px;background:#31315a;"></div>
<div class="r" style="left:932px;top:617px;width:2px;height:34px;background:#31315a;"></div>
<div class="r" style="left:961px;top:617px;width:2px;height:34px;background:#31315a;"></div>
<div class="r" style="left:990px;top:617px;width:2px;height:34px;background:#31315a;"></div>
<div class="r" style="left:1018px;top:617px;width:2px;height:34px;background:#31315a;"></div>
<div class="r" style="left:1047px;top:617px;width:2px;height:34px;background:#31315a;"></div>
<div class="r" style="left:1076px;top:617px;width:2px;height:34px;background:#31315a;"></div>
<div class="r" style="left:1105px;top:617px;width:2px;height:34px;background:#31315a;"></div>
<div class="r" style="left:1135px;top:617px;width:2px;height:34px;background:#31315a;"></div>
<div class="r" style="left:1164px;top:617px;width:2px;height:34px;background:#31315a;"></div>
<div class="r" style="left:1193px;top:617px;width:2px;height:34px;background:#31315a;"></div>
<div class="r" style="left:1222px;top:617px;width:2px;height:34px;background:#31315a;"></div>
<div class="r" style="left:1250px;top:617px;width:2px;height:34px;background:#31315a;"></div>
<div class="r" style="left:1279px;top:617px;width:2px;height:34px;background:#31315a;"></div>
<div class="r" style="left:1308px;top:617px;width:2px;height:34px;background:#31315a;"></div>
<div class="r" style="left:1337px;top:617px;width:2px;height:34px;background:#31315a;"></div>
<div class="r" style="left:1366px;top:617px;width:2px;height:34px;background:#31315a;"></div>
<div class="r" style="left:1394px;top:617px;width:2px;height:34px;background:#31315a;"></div>
<div class="r" style="left:1423px;top:617px;width:2px;height:34px;background:#31315a;"></div>
<div class="r" style="left:1452px;top:617px;width:2px;height:34px;background:#31315a;"></div>
<div class="r" style="left:1481px;top:617px;width:2px;height:34px;background:#31315a;"></div>
<div class="r" style="left:1509px;top:617px;width:2px;height:34px;background:#31315a;"></div>
<div class="r" style="left:1538px;top:617px;width:2px;height:34px;background:#31315a;"></div>
<div class="r" style="left:1567px;top:617px;width:2px;height:34px;background:#31315a;"></div>
<div class="r" style="left:1596px;top:617px;width:2px;height:34px;background:#31315a;"></div>
<div class="r" style="left:1625px;top:617px;width:2px;height:34px;background:#31315a;"></div>
<div class="r" style="left:1653px;top:617px;width:2px;height:34px;background:#31315a;"></div>
<div class="r" style="left:1682px;top:617px;width:2px;height:34px;background:#31315a;"></div>
<div class="r" style="left:1711px;top:617px;width:2px;height:34px;background:#31315a;"></div>
<div class="r" style="left:1740px;top:617px;width:2px;height:34px;background:#31315a;"></div>
<div class="r" style="left:1769px;top:617px;width:2px;height:34px;background:#31315a;"></div>
<div class="r" style="left:1797px;top:617px;width:2px;height:34px;background:#31315a;"></div>
<div class="r" style="left:1826px;top:617px;width:2px;height:34px;background:#31315a;"></div>
<div class="r" style="left:1103px;top:617px;width:1px;height:34px;background:#2c2c52;"></div>
<div class="r" style="left:414px;top:649px;width:1404px;height:1px;background:repeating-linear-gradient(90deg,#000 0 1px,transparent 1px 2px);"></div>
<div class="r" style="left:291px;top:651px;width:122px;height:1px;background:#36365a;"></div>
<div class="r" style="left:292px;top:654px;width:121px;height:1px;background:#29293f;"></div>
<div class="r" style="left:414px;top:651px;width:1404px;height:1px;background:#313156;"></div>
<div class="t" style="left:340.00px;top:664.52px;font-size:11.5px;line-height:11.5px;font-weight:bold;color:#9a9cb0;transform:scaleX(0.9692);">User</div>
<div class="r" style="left:414px;top:652px;width:1404px;height:35px;background:#222337;"></div>
<div class="r" style="left:414px;top:654px;width:1404px;height:1px;background:#2b2b4d;"></div>
<div class="r" style="left:413px;top:652px;width:2px;height:35px;background:#31315a;"></div>
<div class="r" style="left:442px;top:652px;width:2px;height:35px;background:#31315a;"></div>
<div class="r" style="left:470px;top:652px;width:2px;height:35px;background:#31315a;"></div>
<div class="r" style="left:499px;top:652px;width:2px;height:35px;background:#31315a;"></div>
<div class="r" style="left:528px;top:652px;width:2px;height:35px;background:#31315a;"></div>
<div class="r" style="left:557px;top:652px;width:2px;height:35px;background:#31315a;"></div>
<div class="r" style="left:586px;top:652px;width:2px;height:35px;background:#31315a;"></div>
<div class="r" style="left:615px;top:652px;width:2px;height:35px;background:#31315a;"></div>
<div class="r" style="left:643px;top:652px;width:2px;height:35px;background:#31315a;"></div>
<div class="r" style="left:672px;top:652px;width:2px;height:35px;background:#31315a;"></div>
<div class="r" style="left:701px;top:652px;width:2px;height:35px;background:#31315a;"></div>
<div class="r" style="left:730px;top:652px;width:2px;height:35px;background:#31315a;"></div>
<div class="r" style="left:759px;top:652px;width:2px;height:35px;background:#31315a;"></div>
<div class="r" style="left:788px;top:652px;width:2px;height:35px;background:#31315a;"></div>
<div class="r" style="left:817px;top:652px;width:2px;height:35px;background:#31315a;"></div>
<div class="r" style="left:845px;top:652px;width:2px;height:35px;background:#31315a;"></div>
<div class="r" style="left:874px;top:652px;width:2px;height:35px;background:#31315a;"></div>
<div class="r" style="left:903px;top:652px;width:2px;height:35px;background:#31315a;"></div>
<div class="r" style="left:932px;top:652px;width:2px;height:35px;background:#31315a;"></div>
<div class="r" style="left:961px;top:652px;width:2px;height:35px;background:#31315a;"></div>
<div class="r" style="left:990px;top:652px;width:2px;height:35px;background:#31315a;"></div>
<div class="r" style="left:1018px;top:652px;width:2px;height:35px;background:#31315a;"></div>
<div class="r" style="left:1047px;top:652px;width:2px;height:35px;background:#31315a;"></div>
<div class="r" style="left:1076px;top:652px;width:2px;height:35px;background:#31315a;"></div>
<div class="r" style="left:1105px;top:652px;width:2px;height:35px;background:#31315a;"></div>
<div class="r" style="left:1135px;top:652px;width:2px;height:35px;background:#31315a;"></div>
<div class="r" style="left:1164px;top:652px;width:2px;height:35px;background:#31315a;"></div>
<div class="r" style="left:1193px;top:652px;width:2px;height:35px;background:#31315a;"></div>
<div class="r" style="left:1222px;top:652px;width:2px;height:35px;background:#31315a;"></div>
<div class="r" style="left:1250px;top:652px;width:2px;height:35px;background:#31315a;"></div>
<div class="r" style="left:1279px;top:652px;width:2px;height:35px;background:#31315a;"></div>
<div class="r" style="left:1308px;top:652px;width:2px;height:35px;background:#31315a;"></div>
<div class="r" style="left:1337px;top:652px;width:2px;height:35px;background:#31315a;"></div>
<div class="r" style="left:1366px;top:652px;width:2px;height:35px;background:#31315a;"></div>
<div class="r" style="left:1394px;top:652px;width:2px;height:35px;background:#31315a;"></div>
<div class="r" style="left:1423px;top:652px;width:2px;height:35px;background:#31315a;"></div>
<div class="r" style="left:1452px;top:652px;width:2px;height:35px;background:#31315a;"></div>
<div class="r" style="left:1481px;top:652px;width:2px;height:35px;background:#31315a;"></div>
<div class="r" style="left:1509px;top:652px;width:2px;height:35px;background:#31315a;"></div>
<div class="r" style="left:1538px;top:652px;width:2px;height:35px;background:#31315a;"></div>
<div class="r" style="left:1567px;top:652px;width:2px;height:35px;background:#31315a;"></div>
<div class="r" style="left:1596px;top:652px;width:2px;height:35px;background:#31315a;"></div>
<div class="r" style="left:1625px;top:652px;width:2px;height:35px;background:#31315a;"></div>
<div class="r" style="left:1653px;top:652px;width:2px;height:35px;background:#31315a;"></div>
<div class="r" style="left:1682px;top:652px;width:2px;height:35px;background:#31315a;"></div>
<div class="r" style="left:1711px;top:652px;width:2px;height:35px;background:#31315a;"></div>
<div class="r" style="left:1740px;top:652px;width:2px;height:35px;background:#31315a;"></div>
<div class="r" style="left:1769px;top:652px;width:2px;height:35px;background:#31315a;"></div>
<div class="r" style="left:1797px;top:652px;width:2px;height:35px;background:#31315a;"></div>
<div class="r" style="left:1826px;top:652px;width:2px;height:35px;background:#31315a;"></div>
<div class="r" style="left:1103px;top:652px;width:1px;height:35px;background:#2c2c52;"></div>
<div class="r" style="left:414px;top:685px;width:1404px;height:1px;background:repeating-linear-gradient(90deg,#000 0 1px,transparent 1px 2px);"></div>
<div class="r" style="left:291px;top:687px;width:122px;height:1px;background:#36365a;"></div>
<div class="r" style="left:292px;top:690px;width:121px;height:1px;background:#29293f;"></div>
<div class="r" style="left:414px;top:687px;width:1404px;height:1px;background:#313156;"></div>
<div class="t" style="left:324.60px;top:700.27px;font-size:11.5px;line-height:11.5px;font-weight:bold;color:#9a9cb0;transform:scaleX(1.0232);">Employee</div>
<div class="r" style="left:414px;top:688px;width:1404px;height:35px;background:#222337;"></div>
<div class="r" style="left:414px;top:690px;width:1404px;height:1px;background:#2b2b4d;"></div>
<div class="r" style="left:413px;top:688px;width:2px;height:35px;background:#31315a;"></div>
<div class="r" style="left:442px;top:688px;width:2px;height:35px;background:#31315a;"></div>
<div class="r" style="left:470px;top:688px;width:2px;height:35px;background:#31315a;"></div>
<div class="r" style="left:499px;top:688px;width:2px;height:35px;background:#31315a;"></div>
<div class="r" style="left:528px;top:688px;width:2px;height:35px;background:#31315a;"></div>
<div class="r" style="left:557px;top:688px;width:2px;height:35px;background:#31315a;"></div>
<div class="r" style="left:586px;top:688px;width:2px;height:35px;background:#31315a;"></div>
<div class="r" style="left:615px;top:688px;width:2px;height:35px;background:#31315a;"></div>
<div class="r" style="left:643px;top:688px;width:2px;height:35px;background:#31315a;"></div>
<div class="r" style="left:672px;top:688px;width:2px;height:35px;background:#31315a;"></div>
<div class="r" style="left:701px;top:688px;width:2px;height:35px;background:#31315a;"></div>
<div class="r" style="left:730px;top:688px;width:2px;height:35px;background:#31315a;"></div>
<div class="r" style="left:759px;top:688px;width:2px;height:35px;background:#31315a;"></div>
<div class="r" style="left:788px;top:688px;width:2px;height:35px;background:#31315a;"></div>
<div class="r" style="left:817px;top:688px;width:2px;height:35px;background:#31315a;"></div>
<div class="r" style="left:845px;top:688px;width:2px;height:35px;background:#31315a;"></div>
<div class="r" style="left:874px;top:688px;width:2px;height:35px;background:#31315a;"></div>
<div class="r" style="left:903px;top:688px;width:2px;height:35px;background:#31315a;"></div>
<div class="r" style="left:932px;top:688px;width:2px;height:35px;background:#31315a;"></div>
<div class="r" style="left:961px;top:688px;width:2px;height:35px;background:#31315a;"></div>
<div class="r" style="left:990px;top:688px;width:2px;height:35px;background:#31315a;"></div>
<div class="r" style="left:1018px;top:688px;width:2px;height:35px;background:#31315a;"></div>
<div class="r" style="left:1047px;top:688px;width:2px;height:35px;background:#31315a;"></div>
<div class="r" style="left:1076px;top:688px;width:2px;height:35px;background:#31315a;"></div>
<div class="r" style="left:1105px;top:688px;width:2px;height:35px;background:#31315a;"></div>
<div class="r" style="left:1135px;top:688px;width:2px;height:35px;background:#31315a;"></div>
<div class="r" style="left:1164px;top:688px;width:2px;height:35px;background:#31315a;"></div>
<div class="r" style="left:1193px;top:688px;width:2px;height:35px;background:#31315a;"></div>
<div class="r" style="left:1222px;top:688px;width:2px;height:35px;background:#31315a;"></div>
<div class="r" style="left:1250px;top:688px;width:2px;height:35px;background:#31315a;"></div>
<div class="r" style="left:1279px;top:688px;width:2px;height:35px;background:#31315a;"></div>
<div class="r" style="left:1308px;top:688px;width:2px;height:35px;background:#31315a;"></div>
<div class="r" style="left:1337px;top:688px;width:2px;height:35px;background:#31315a;"></div>
<div class="r" style="left:1366px;top:688px;width:2px;height:35px;background:#31315a;"></div>
<div class="r" style="left:1394px;top:688px;width:2px;height:35px;background:#31315a;"></div>
<div class="r" style="left:1423px;top:688px;width:2px;height:35px;background:#31315a;"></div>
<div class="r" style="left:1452px;top:688px;width:2px;height:35px;background:#31315a;"></div>
<div class="r" style="left:1481px;top:688px;width:2px;height:35px;background:#31315a;"></div>
<div class="r" style="left:1509px;top:688px;width:2px;height:35px;background:#31315a;"></div>
<div class="r" style="left:1538px;top:688px;width:2px;height:35px;background:#31315a;"></div>
<div class="r" style="left:1567px;top:688px;width:2px;height:35px;background:#31315a;"></div>
<div class="r" style="left:1596px;top:688px;width:2px;height:35px;background:#31315a;"></div>
<div class="r" style="left:1625px;top:688px;width:2px;height:35px;background:#31315a;"></div>
<div class="r" style="left:1653px;top:688px;width:2px;height:35px;background:#31315a;"></div>
<div class="r" style="left:1682px;top:688px;width:2px;height:35px;background:#31315a;"></div>
<div class="r" style="left:1711px;top:688px;width:2px;height:35px;background:#31315a;"></div>
<div class="r" style="left:1740px;top:688px;width:2px;height:35px;background:#31315a;"></div>
<div class="r" style="left:1769px;top:688px;width:2px;height:35px;background:#31315a;"></div>
<div class="r" style="left:1797px;top:688px;width:2px;height:35px;background:#31315a;"></div>
<div class="r" style="left:1826px;top:688px;width:2px;height:35px;background:#31315a;"></div>
<div class="r" style="left:1103px;top:688px;width:1px;height:35px;background:#2c2c52;"></div>
<div class="r" style="left:414px;top:721px;width:1404px;height:1px;background:repeating-linear-gradient(90deg,#000 0 1px,transparent 1px 2px);"></div>
<div class="r" style="left:291px;top:723px;width:122px;height:1px;background:#36365a;"></div>
<div class="r" style="left:292px;top:726px;width:121px;height:1px;background:#29293f;"></div>
<div class="r" style="left:414px;top:723px;width:1404px;height:1px;background:#313156;"></div>
<div class="t" style="left:331.90px;top:736.02px;font-size:11.5px;line-height:11.5px;font-weight:bold;color:#9a9cb0;transform:scaleX(1.0517);">Update</div>
<div class="r" style="left:414px;top:724px;width:1404px;height:35px;background:#222337;"></div>
<div class="r" style="left:414px;top:725px;width:1404px;height:1px;background:#2b2b4d;"></div>
<div class="r" style="left:413px;top:724px;width:2px;height:35px;background:#31315a;"></div>
<div class="r" style="left:442px;top:724px;width:2px;height:35px;background:#31315a;"></div>
<div class="r" style="left:470px;top:724px;width:2px;height:35px;background:#31315a;"></div>
<div class="r" style="left:499px;top:724px;width:2px;height:35px;background:#31315a;"></div>
<div class="r" style="left:528px;top:724px;width:2px;height:35px;background:#31315a;"></div>
<div class="r" style="left:557px;top:724px;width:2px;height:35px;background:#31315a;"></div>
<div class="r" style="left:586px;top:724px;width:2px;height:35px;background:#31315a;"></div>
<div class="r" style="left:615px;top:724px;width:2px;height:35px;background:#31315a;"></div>
<div class="r" style="left:643px;top:724px;width:2px;height:35px;background:#31315a;"></div>
<div class="r" style="left:672px;top:724px;width:2px;height:35px;background:#31315a;"></div>
<div class="r" style="left:701px;top:724px;width:2px;height:35px;background:#31315a;"></div>
<div class="r" style="left:730px;top:724px;width:2px;height:35px;background:#31315a;"></div>
<div class="r" style="left:759px;top:724px;width:2px;height:35px;background:#31315a;"></div>
<div class="r" style="left:788px;top:724px;width:2px;height:35px;background:#31315a;"></div>
<div class="r" style="left:817px;top:724px;width:2px;height:35px;background:#31315a;"></div>
<div class="r" style="left:845px;top:724px;width:2px;height:35px;background:#31315a;"></div>
<div class="r" style="left:874px;top:724px;width:2px;height:35px;background:#31315a;"></div>
<div class="r" style="left:903px;top:724px;width:2px;height:35px;background:#31315a;"></div>
<div class="r" style="left:932px;top:724px;width:2px;height:35px;background:#31315a;"></div>
<div class="r" style="left:961px;top:724px;width:2px;height:35px;background:#31315a;"></div>
<div class="r" style="left:990px;top:724px;width:2px;height:35px;background:#31315a;"></div>
<div class="r" style="left:1018px;top:724px;width:2px;height:35px;background:#31315a;"></div>
<div class="r" style="left:1047px;top:724px;width:2px;height:35px;background:#31315a;"></div>
<div class="r" style="left:1076px;top:724px;width:2px;height:35px;background:#31315a;"></div>
<div class="r" style="left:1105px;top:724px;width:2px;height:35px;background:#31315a;"></div>
<div class="r" style="left:1135px;top:724px;width:2px;height:35px;background:#31315a;"></div>
<div class="r" style="left:1164px;top:724px;width:2px;height:35px;background:#31315a;"></div>
<div class="r" style="left:1193px;top:724px;width:2px;height:35px;background:#31315a;"></div>
<div class="r" style="left:1222px;top:724px;width:2px;height:35px;background:#31315a;"></div>
<div class="r" style="left:1250px;top:724px;width:2px;height:35px;background:#31315a;"></div>
<div class="r" style="left:1279px;top:724px;width:2px;height:35px;background:#31315a;"></div>
<div class="r" style="left:1308px;top:724px;width:2px;height:35px;background:#31315a;"></div>
<div class="r" style="left:1337px;top:724px;width:2px;height:35px;background:#31315a;"></div>
<div class="r" style="left:1366px;top:724px;width:2px;height:35px;background:#31315a;"></div>
<div class="r" style="left:1394px;top:724px;width:2px;height:35px;background:#31315a;"></div>
<div class="r" style="left:1423px;top:724px;width:2px;height:35px;background:#31315a;"></div>
<div class="r" style="left:1452px;top:724px;width:2px;height:35px;background:#31315a;"></div>
<div class="r" style="left:1481px;top:724px;width:2px;height:35px;background:#31315a;"></div>
<div class="r" style="left:1509px;top:724px;width:2px;height:35px;background:#31315a;"></div>
<div class="r" style="left:1538px;top:724px;width:2px;height:35px;background:#31315a;"></div>
<div class="r" style="left:1567px;top:724px;width:2px;height:35px;background:#31315a;"></div>
<div class="r" style="left:1596px;top:724px;width:2px;height:35px;background:#31315a;"></div>
<div class="r" style="left:1625px;top:724px;width:2px;height:35px;background:#31315a;"></div>
<div class="r" style="left:1653px;top:724px;width:2px;height:35px;background:#31315a;"></div>
<div class="r" style="left:1682px;top:724px;width:2px;height:35px;background:#31315a;"></div>
<div class="r" style="left:1711px;top:724px;width:2px;height:35px;background:#31315a;"></div>
<div class="r" style="left:1740px;top:724px;width:2px;height:35px;background:#31315a;"></div>
<div class="r" style="left:1769px;top:724px;width:2px;height:35px;background:#31315a;"></div>
<div class="r" style="left:1797px;top:724px;width:2px;height:35px;background:#31315a;"></div>
<div class="r" style="left:1826px;top:724px;width:2px;height:35px;background:#31315a;"></div>
<div class="r" style="left:1103px;top:724px;width:1px;height:35px;background:#2c2c52;"></div>
<div class="r" style="left:414px;top:757px;width:1404px;height:1px;background:repeating-linear-gradient(90deg,#000 0 1px,transparent 1px 2px);"></div>
<div class="r" style="left:291px;top:759px;width:122px;height:1px;background:#36365a;"></div>
<div class="r" style="left:292px;top:762px;width:121px;height:1px;background:#29293f;"></div>
<div class="r" style="left:414px;top:759px;width:1404px;height:1px;background:#313156;"></div>
<div class="t" style="left:300.65px;top:771.77px;font-size:11.5px;line-height:11.5px;font-weight:bold;color:#9a9cb0;transform:scaleX(1.0000);">Disability Discount</div>
<div class="r" style="left:414px;top:760px;width:1404px;height:34px;background:#222337;"></div>
<div class="r" style="left:414px;top:761px;width:1404px;height:1px;background:#2b2b4d;"></div>
<div class="r" style="left:413px;top:760px;width:2px;height:34px;background:#31315a;"></div>
<div class="r" style="left:442px;top:760px;width:2px;height:34px;background:#31315a;"></div>
<div class="r" style="left:470px;top:760px;width:2px;height:34px;background:#31315a;"></div>
<div class="r" style="left:499px;top:760px;width:2px;height:34px;background:#31315a;"></div>
<div class="r" style="left:528px;top:760px;width:2px;height:34px;background:#31315a;"></div>
<div class="r" style="left:557px;top:760px;width:2px;height:34px;background:#31315a;"></div>
<div class="r" style="left:586px;top:760px;width:2px;height:34px;background:#31315a;"></div>
<div class="r" style="left:615px;top:760px;width:2px;height:34px;background:#31315a;"></div>
<div class="r" style="left:643px;top:760px;width:2px;height:34px;background:#31315a;"></div>
<div class="r" style="left:672px;top:760px;width:2px;height:34px;background:#31315a;"></div>
<div class="r" style="left:701px;top:760px;width:2px;height:34px;background:#31315a;"></div>
<div class="r" style="left:730px;top:760px;width:2px;height:34px;background:#31315a;"></div>
<div class="r" style="left:759px;top:760px;width:2px;height:34px;background:#31315a;"></div>
<div class="r" style="left:788px;top:760px;width:2px;height:34px;background:#31315a;"></div>
<div class="r" style="left:817px;top:760px;width:2px;height:34px;background:#31315a;"></div>
<div class="r" style="left:845px;top:760px;width:2px;height:34px;background:#31315a;"></div>
<div class="r" style="left:874px;top:760px;width:2px;height:34px;background:#31315a;"></div>
<div class="r" style="left:903px;top:760px;width:2px;height:34px;background:#31315a;"></div>
<div class="r" style="left:932px;top:760px;width:2px;height:34px;background:#31315a;"></div>
<div class="r" style="left:961px;top:760px;width:2px;height:34px;background:#31315a;"></div>
<div class="r" style="left:990px;top:760px;width:2px;height:34px;background:#31315a;"></div>
<div class="r" style="left:1018px;top:760px;width:2px;height:34px;background:#31315a;"></div>
<div class="r" style="left:1047px;top:760px;width:2px;height:34px;background:#31315a;"></div>
<div class="r" style="left:1076px;top:760px;width:2px;height:34px;background:#31315a;"></div>
<div class="r" style="left:1105px;top:760px;width:2px;height:34px;background:#31315a;"></div>
<div class="r" style="left:1135px;top:760px;width:2px;height:34px;background:#31315a;"></div>
<div class="r" style="left:1164px;top:760px;width:2px;height:34px;background:#31315a;"></div>
<div class="r" style="left:1193px;top:760px;width:2px;height:34px;background:#31315a;"></div>
<div class="r" style="left:1222px;top:760px;width:2px;height:34px;background:#31315a;"></div>
<div class="r" style="left:1250px;top:760px;width:2px;height:34px;background:#31315a;"></div>
<div class="r" style="left:1279px;top:760px;width:2px;height:34px;background:#31315a;"></div>
<div class="r" style="left:1308px;top:760px;width:2px;height:34px;background:#31315a;"></div>
<div class="r" style="left:1337px;top:760px;width:2px;height:34px;background:#31315a;"></div>
<div class="r" style="left:1366px;top:760px;width:2px;height:34px;background:#31315a;"></div>
<div class="r" style="left:1394px;top:760px;width:2px;height:34px;background:#31315a;"></div>
<div class="r" style="left:1423px;top:760px;width:2px;height:34px;background:#31315a;"></div>
<div class="r" style="left:1452px;top:760px;width:2px;height:34px;background:#31315a;"></div>
<div class="r" style="left:1481px;top:760px;width:2px;height:34px;background:#31315a;"></div>
<div class="r" style="left:1509px;top:760px;width:2px;height:34px;background:#31315a;"></div>
<div class="r" style="left:1538px;top:760px;width:2px;height:34px;background:#31315a;"></div>
<div class="r" style="left:1567px;top:760px;width:2px;height:34px;background:#31315a;"></div>
<div class="r" style="left:1596px;top:760px;width:2px;height:34px;background:#31315a;"></div>
<div class="r" style="left:1625px;top:760px;width:2px;height:34px;background:#31315a;"></div>
<div class="r" style="left:1653px;top:760px;width:2px;height:34px;background:#31315a;"></div>
<div class="r" style="left:1682px;top:760px;width:2px;height:34px;background:#31315a;"></div>
<div class="r" style="left:1711px;top:760px;width:2px;height:34px;background:#31315a;"></div>
<div class="r" style="left:1740px;top:760px;width:2px;height:34px;background:#31315a;"></div>
<div class="r" style="left:1769px;top:760px;width:2px;height:34px;background:#31315a;"></div>
<div class="r" style="left:1797px;top:760px;width:2px;height:34px;background:#31315a;"></div>
<div class="r" style="left:1826px;top:760px;width:2px;height:34px;background:#31315a;"></div>
<div class="r" style="left:1103px;top:760px;width:1px;height:34px;background:#2c2c52;"></div>
<div class="r" style="left:414px;top:792px;width:1404px;height:1px;background:repeating-linear-gradient(90deg,#000 0 1px,transparent 1px 2px);"></div>
<div class="r" style="left:291px;top:794px;width:122px;height:1px;background:#36365a;"></div>
<div class="r" style="left:292px;top:797px;width:121px;height:1px;background:#29293f;"></div>
<div class="r" style="left:414px;top:794px;width:1404px;height:1px;background:#313156;"></div>
<div class="t" style="left:341.85px;top:807.52px;font-size:11.5px;line-height:11.5px;font-weight:bold;color:#9a9cb0;transform:scaleX(1.0636);">abc</div>
<div class="r" style="left:414px;top:795px;width:1404px;height:35px;background:#222337;"></div>
<div class="r" style="left:414px;top:797px;width:1404px;height:1px;background:#2b2b4d;"></div>
<div class="r" style="left:413px;top:795px;width:2px;height:35px;background:#31315a;"></div>
<div class="r" style="left:442px;top:795px;width:2px;height:35px;background:#31315a;"></div>
<div class="r" style="left:470px;top:795px;width:2px;height:35px;background:#31315a;"></div>
<div class="r" style="left:499px;top:795px;width:2px;height:35px;background:#31315a;"></div>
<div class="r" style="left:528px;top:795px;width:2px;height:35px;background:#31315a;"></div>
<div class="r" style="left:557px;top:795px;width:2px;height:35px;background:#31315a;"></div>
<div class="r" style="left:586px;top:795px;width:2px;height:35px;background:#31315a;"></div>
<div class="r" style="left:615px;top:795px;width:2px;height:35px;background:#31315a;"></div>
<div class="r" style="left:643px;top:795px;width:2px;height:35px;background:#31315a;"></div>
<div class="r" style="left:672px;top:795px;width:2px;height:35px;background:#31315a;"></div>
<div class="r" style="left:701px;top:795px;width:2px;height:35px;background:#31315a;"></div>
<div class="r" style="left:730px;top:795px;width:2px;height:35px;background:#31315a;"></div>
<div class="r" style="left:759px;top:795px;width:2px;height:35px;background:#31315a;"></div>
<div class="r" style="left:788px;top:795px;width:2px;height:35px;background:#31315a;"></div>
<div class="r" style="left:817px;top:795px;width:2px;height:35px;background:#31315a;"></div>
<div class="r" style="left:845px;top:795px;width:2px;height:35px;background:#31315a;"></div>
<div class="r" style="left:874px;top:795px;width:2px;height:35px;background:#31315a;"></div>
<div class="r" style="left:903px;top:795px;width:2px;height:35px;background:#31315a;"></div>
<div class="r" style="left:932px;top:795px;width:2px;height:35px;background:#31315a;"></div>
<div class="r" style="left:961px;top:795px;width:2px;height:35px;background:#31315a;"></div>
<div class="r" style="left:990px;top:795px;width:2px;height:35px;background:#31315a;"></div>
<div class="r" style="left:1018px;top:795px;width:2px;height:35px;background:#31315a;"></div>
<div class="r" style="left:1047px;top:795px;width:2px;height:35px;background:#31315a;"></div>
<div class="r" style="left:1076px;top:795px;width:2px;height:35px;background:#31315a;"></div>
<div class="r" style="left:1105px;top:795px;width:2px;height:35px;background:#31315a;"></div>
<div class="r" style="left:1135px;top:795px;width:2px;height:35px;background:#31315a;"></div>
<div class="r" style="left:1164px;top:795px;width:2px;height:35px;background:#31315a;"></div>
<div class="r" style="left:1193px;top:795px;width:2px;height:35px;background:#31315a;"></div>
<div class="r" style="left:1222px;top:795px;width:2px;height:35px;background:#31315a;"></div>
<div class="r" style="left:1250px;top:795px;width:2px;height:35px;background:#31315a;"></div>
<div class="r" style="left:1279px;top:795px;width:2px;height:35px;background:#31315a;"></div>
<div class="r" style="left:1308px;top:795px;width:2px;height:35px;background:#31315a;"></div>
<div class="r" style="left:1337px;top:795px;width:2px;height:35px;background:#31315a;"></div>
<div class="r" style="left:1366px;top:795px;width:2px;height:35px;background:#31315a;"></div>
<div class="r" style="left:1394px;top:795px;width:2px;height:35px;background:#31315a;"></div>
<div class="r" style="left:1423px;top:795px;width:2px;height:35px;background:#31315a;"></div>
<div class="r" style="left:1452px;top:795px;width:2px;height:35px;background:#31315a;"></div>
<div class="r" style="left:1481px;top:795px;width:2px;height:35px;background:#31315a;"></div>
<div class="r" style="left:1509px;top:795px;width:2px;height:35px;background:#31315a;"></div>
<div class="r" style="left:1538px;top:795px;width:2px;height:35px;background:#31315a;"></div>
<div class="r" style="left:1567px;top:795px;width:2px;height:35px;background:#31315a;"></div>
<div class="r" style="left:1596px;top:795px;width:2px;height:35px;background:#31315a;"></div>
<div class="r" style="left:1625px;top:795px;width:2px;height:35px;background:#31315a;"></div>
<div class="r" style="left:1653px;top:795px;width:2px;height:35px;background:#31315a;"></div>
<div class="r" style="left:1682px;top:795px;width:2px;height:35px;background:#31315a;"></div>
<div class="r" style="left:1711px;top:795px;width:2px;height:35px;background:#31315a;"></div>
<div class="r" style="left:1740px;top:795px;width:2px;height:35px;background:#31315a;"></div>
<div class="r" style="left:1769px;top:795px;width:2px;height:35px;background:#31315a;"></div>
<div class="r" style="left:1797px;top:795px;width:2px;height:35px;background:#31315a;"></div>
<div class="r" style="left:1826px;top:795px;width:2px;height:35px;background:#31315a;"></div>
<div class="r" style="left:1103px;top:795px;width:1px;height:35px;background:#2c2c52;"></div>
<div class="r" style="left:414px;top:828px;width:1404px;height:1px;background:repeating-linear-gradient(90deg,#000 0 1px,transparent 1px 2px);"></div>
<div class="r" style="left:291px;top:830px;width:122px;height:1px;background:#36365a;"></div>
<div class="r" style="left:292px;top:833px;width:121px;height:1px;background:#29293f;"></div>
<div class="r" style="left:414px;top:830px;width:1404px;height:1px;background:#313156;"></div>
<div class="t" style="left:314.90px;top:843.27px;font-size:11.5px;line-height:11.5px;font-weight:bold;color:#9a9cb0;transform:scaleX(1.0562);">ab3c3234333</div>
<div class="r" style="left:414px;top:831px;width:1404px;height:35px;background:#222337;"></div>
<div class="r" style="left:414px;top:833px;width:1404px;height:1px;background:#2b2b4d;"></div>
<div class="r" style="left:413px;top:831px;width:2px;height:35px;background:#31315a;"></div>
<div class="r" style="left:442px;top:831px;width:2px;height:35px;background:#31315a;"></div>
<div class="r" style="left:470px;top:831px;width:2px;height:35px;background:#31315a;"></div>
<div class="r" style="left:499px;top:831px;width:2px;height:35px;background:#31315a;"></div>
<div class="r" style="left:528px;top:831px;width:2px;height:35px;background:#31315a;"></div>
<div class="r" style="left:557px;top:831px;width:2px;height:35px;background:#31315a;"></div>
<div class="r" style="left:586px;top:831px;width:2px;height:35px;background:#31315a;"></div>
<div class="r" style="left:615px;top:831px;width:2px;height:35px;background:#31315a;"></div>
<div class="r" style="left:643px;top:831px;width:2px;height:35px;background:#31315a;"></div>
<div class="r" style="left:672px;top:831px;width:2px;height:35px;background:#31315a;"></div>
<div class="r" style="left:701px;top:831px;width:2px;height:35px;background:#31315a;"></div>
<div class="r" style="left:730px;top:831px;width:2px;height:35px;background:#31315a;"></div>
<div class="r" style="left:759px;top:831px;width:2px;height:35px;background:#31315a;"></div>
<div class="r" style="left:788px;top:831px;width:2px;height:35px;background:#31315a;"></div>
<div class="r" style="left:817px;top:831px;width:2px;height:35px;background:#31315a;"></div>
<div class="r" style="left:845px;top:831px;width:2px;height:35px;background:#31315a;"></div>
<div class="r" style="left:874px;top:831px;width:2px;height:35px;background:#31315a;"></div>
<div class="r" style="left:903px;top:831px;width:2px;height:35px;background:#31315a;"></div>
<div class="r" style="left:932px;top:831px;width:2px;height:35px;background:#31315a;"></div>
<div class="r" style="left:961px;top:831px;width:2px;height:35px;background:#31315a;"></div>
<div class="r" style="left:990px;top:831px;width:2px;height:35px;background:#31315a;"></div>
<div class="r" style="left:1018px;top:831px;width:2px;height:35px;background:#31315a;"></div>
<div class="r" style="left:1047px;top:831px;width:2px;height:35px;background:#31315a;"></div>
<div class="r" style="left:1076px;top:831px;width:2px;height:35px;background:#31315a;"></div>
<div class="r" style="left:1105px;top:831px;width:2px;height:35px;background:#31315a;"></div>
<div class="r" style="left:1135px;top:831px;width:2px;height:35px;background:#31315a;"></div>
<div class="r" style="left:1164px;top:831px;width:2px;height:35px;background:#31315a;"></div>
<div class="r" style="left:1193px;top:831px;width:2px;height:35px;background:#31315a;"></div>
<div class="r" style="left:1222px;top:831px;width:2px;height:35px;background:#31315a;"></div>
<div class="r" style="left:1250px;top:831px;width:2px;height:35px;background:#31315a;"></div>
<div class="r" style="left:1279px;top:831px;width:2px;height:35px;background:#31315a;"></div>
<div class="r" style="left:1308px;top:831px;width:2px;height:35px;background:#31315a;"></div>
<div class="r" style="left:1337px;top:831px;width:2px;height:35px;background:#31315a;"></div>
<div class="r" style="left:1366px;top:831px;width:2px;height:35px;background:#31315a;"></div>
<div class="r" style="left:1394px;top:831px;width:2px;height:35px;background:#31315a;"></div>
<div class="r" style="left:1423px;top:831px;width:2px;height:35px;background:#31315a;"></div>
<div class="r" style="left:1452px;top:831px;width:2px;height:35px;background:#31315a;"></div>
<div class="r" style="left:1481px;top:831px;width:2px;height:35px;background:#31315a;"></div>
<div class="r" style="left:1509px;top:831px;width:2px;height:35px;background:#31315a;"></div>
<div class="r" style="left:1538px;top:831px;width:2px;height:35px;background:#31315a;"></div>
<div class="r" style="left:1567px;top:831px;width:2px;height:35px;background:#31315a;"></div>
<div class="r" style="left:1596px;top:831px;width:2px;height:35px;background:#31315a;"></div>
<div class="r" style="left:1625px;top:831px;width:2px;height:35px;background:#31315a;"></div>
<div class="r" style="left:1653px;top:831px;width:2px;height:35px;background:#31315a;"></div>
<div class="r" style="left:1682px;top:831px;width:2px;height:35px;background:#31315a;"></div>
<div class="r" style="left:1711px;top:831px;width:2px;height:35px;background:#31315a;"></div>
<div class="r" style="left:1740px;top:831px;width:2px;height:35px;background:#31315a;"></div>
<div class="r" style="left:1769px;top:831px;width:2px;height:35px;background:#31315a;"></div>
<div class="r" style="left:1797px;top:831px;width:2px;height:35px;background:#31315a;"></div>
<div class="r" style="left:1826px;top:831px;width:2px;height:35px;background:#31315a;"></div>
<div class="r" style="left:1103px;top:831px;width:1px;height:35px;background:#2c2c52;"></div>
<div class="r" style="left:414px;top:864px;width:1404px;height:1px;background:repeating-linear-gradient(90deg,#000 0 1px,transparent 1px 2px);"></div>
<div class="r" style="left:291px;top:866px;width:122px;height:1px;background:#36365a;"></div>
<div class="r" style="left:292px;top:869px;width:121px;height:1px;background:#29293f;"></div>
<div class="r" style="left:414px;top:866px;width:1404px;height:1px;background:#313156;"></div>
<div class="t" style="left:311.65px;top:879.02px;font-size:11.5px;line-height:11.5px;font-weight:bold;color:#9a9cb0;transform:scaleX(1.0530);">ab3c33234333</div>
<div class="r" style="left:414px;top:867px;width:1404px;height:35px;background:#222337;"></div>
<div class="r" style="left:414px;top:868px;width:1404px;height:1px;background:#2b2b4d;"></div>
<div class="r" style="left:413px;top:867px;width:2px;height:35px;background:#31315a;"></div>
<div class="r" style="left:442px;top:867px;width:2px;height:35px;background:#31315a;"></div>
<div class="r" style="left:470px;top:867px;width:2px;height:35px;background:#31315a;"></div>
<div class="r" style="left:499px;top:867px;width:2px;height:35px;background:#31315a;"></div>
<div class="r" style="left:528px;top:867px;width:2px;height:35px;background:#31315a;"></div>
<div class="r" style="left:557px;top:867px;width:2px;height:35px;background:#31315a;"></div>
<div class="r" style="left:586px;top:867px;width:2px;height:35px;background:#31315a;"></div>
<div class="r" style="left:615px;top:867px;width:2px;height:35px;background:#31315a;"></div>
<div class="r" style="left:643px;top:867px;width:2px;height:35px;background:#31315a;"></div>
<div class="r" style="left:672px;top:867px;width:2px;height:35px;background:#31315a;"></div>
<div class="r" style="left:701px;top:867px;width:2px;height:35px;background:#31315a;"></div>
<div class="r" style="left:730px;top:867px;width:2px;height:35px;background:#31315a;"></div>
<div class="r" style="left:759px;top:867px;width:2px;height:35px;background:#31315a;"></div>
<div class="r" style="left:788px;top:867px;width:2px;height:35px;background:#31315a;"></div>
<div class="r" style="left:817px;top:867px;width:2px;height:35px;background:#31315a;"></div>
<div class="r" style="left:845px;top:867px;width:2px;height:35px;background:#31315a;"></div>
<div class="r" style="left:874px;top:867px;width:2px;height:35px;background:#31315a;"></div>
<div class="r" style="left:903px;top:867px;width:2px;height:35px;background:#31315a;"></div>
<div class="r" style="left:932px;top:867px;width:2px;height:35px;background:#31315a;"></div>
<div class="r" style="left:961px;top:867px;width:2px;height:35px;background:#31315a;"></div>
<div class="r" style="left:990px;top:867px;width:2px;height:35px;background:#31315a;"></div>
<div class="r" style="left:1018px;top:867px;width:2px;height:35px;background:#31315a;"></div>
<div class="r" style="left:1047px;top:867px;width:2px;height:35px;background:#31315a;"></div>
<div class="r" style="left:1076px;top:867px;width:2px;height:35px;background:#31315a;"></div>
<div class="r" style="left:1105px;top:867px;width:2px;height:35px;background:#31315a;"></div>
<div class="r" style="left:1135px;top:867px;width:2px;height:35px;background:#31315a;"></div>
<div class="r" style="left:1164px;top:867px;width:2px;height:35px;background:#31315a;"></div>
<div class="r" style="left:1193px;top:867px;width:2px;height:35px;background:#31315a;"></div>
<div class="r" style="left:1222px;top:867px;width:2px;height:35px;background:#31315a;"></div>
<div class="r" style="left:1250px;top:867px;width:2px;height:35px;background:#31315a;"></div>
<div class="r" style="left:1279px;top:867px;width:2px;height:35px;background:#31315a;"></div>
<div class="r" style="left:1308px;top:867px;width:2px;height:35px;background:#31315a;"></div>
<div class="r" style="left:1337px;top:867px;width:2px;height:35px;background:#31315a;"></div>
<div class="r" style="left:1366px;top:867px;width:2px;height:35px;background:#31315a;"></div>
<div class="r" style="left:1394px;top:867px;width:2px;height:35px;background:#31315a;"></div>
<div class="r" style="left:1423px;top:867px;width:2px;height:35px;background:#31315a;"></div>
<div class="r" style="left:1452px;top:867px;width:2px;height:35px;background:#31315a;"></div>
<div class="r" style="left:1481px;top:867px;width:2px;height:35px;background:#31315a;"></div>
<div class="r" style="left:1509px;top:867px;width:2px;height:35px;background:#31315a;"></div>
<div class="r" style="left:1538px;top:867px;width:2px;height:35px;background:#31315a;"></div>
<div class="r" style="left:1567px;top:867px;width:2px;height:35px;background:#31315a;"></div>
<div class="r" style="left:1596px;top:867px;width:2px;height:35px;background:#31315a;"></div>
<div class="r" style="left:1625px;top:867px;width:2px;height:35px;background:#31315a;"></div>
<div class="r" style="left:1653px;top:867px;width:2px;height:35px;background:#31315a;"></div>
<div class="r" style="left:1682px;top:867px;width:2px;height:35px;background:#31315a;"></div>
<div class="r" style="left:1711px;top:867px;width:2px;height:35px;background:#31315a;"></div>
<div class="r" style="left:1740px;top:867px;width:2px;height:35px;background:#31315a;"></div>
<div class="r" style="left:1769px;top:867px;width:2px;height:35px;background:#31315a;"></div>
<div class="r" style="left:1797px;top:867px;width:2px;height:35px;background:#31315a;"></div>
<div class="r" style="left:1826px;top:867px;width:2px;height:35px;background:#31315a;"></div>
<div class="r" style="left:1103px;top:867px;width:1px;height:35px;background:#2c2c52;"></div>
<div class="r" style="left:414px;top:900px;width:1404px;height:1px;background:repeating-linear-gradient(90deg,#000 0 1px,transparent 1px 2px);"></div>
<div class="r" style="left:291px;top:902px;width:122px;height:1px;background:#36365a;"></div>
<div class="r" style="left:292px;top:905px;width:121px;height:1px;background:#29293f;"></div>
<div class="r" style="left:414px;top:902px;width:1404px;height:1px;background:#313156;"></div>
<div class="t" style="left:304.95px;top:914.77px;font-size:11.5px;line-height:11.5px;font-weight:bold;color:#9a9cb0;transform:scaleX(1.0526);">ab3c3333234333</div>
<div class="r" style="left:414px;top:903px;width:1404px;height:34px;background:#222337;"></div>
<div class="r" style="left:414px;top:904px;width:1404px;height:1px;background:#2b2b4d;"></div>
<div class="r" style="left:413px;top:903px;width:2px;height:34px;background:#31315a;"></div>
<div class="r" style="left:442px;top:903px;width:2px;height:34px;background:#31315a;"></div>
<div class="r" style="left:470px;top:903px;width:2px;height:34px;background:#31315a;"></div>
<div class="r" style="left:499px;top:903px;width:2px;height:34px;background:#31315a;"></div>
<div class="r" style="left:528px;top:903px;width:2px;height:34px;background:#31315a;"></div>
<div class="r" style="left:557px;top:903px;width:2px;height:34px;background:#31315a;"></div>
<div class="r" style="left:586px;top:903px;width:2px;height:34px;background:#31315a;"></div>
<div class="r" style="left:615px;top:903px;width:2px;height:34px;background:#31315a;"></div>
<div class="r" style="left:643px;top:903px;width:2px;height:34px;background:#31315a;"></div>
<div class="r" style="left:672px;top:903px;width:2px;height:34px;background:#31315a;"></div>
<div class="r" style="left:701px;top:903px;width:2px;height:34px;background:#31315a;"></div>
<div class="r" style="left:730px;top:903px;width:2px;height:34px;background:#31315a;"></div>
<div class="r" style="left:759px;top:903px;width:2px;height:34px;background:#31315a;"></div>
<div class="r" style="left:788px;top:903px;width:2px;height:34px;background:#31315a;"></div>
<div class="r" style="left:817px;top:903px;width:2px;height:34px;background:#31315a;"></div>
<div class="r" style="left:845px;top:903px;width:2px;height:34px;background:#31315a;"></div>
<div class="r" style="left:874px;top:903px;width:2px;height:34px;background:#31315a;"></div>
<div class="r" style="left:903px;top:903px;width:2px;height:34px;background:#31315a;"></div>
<div class="r" style="left:932px;top:903px;width:2px;height:34px;background:#31315a;"></div>
<div class="r" style="left:961px;top:903px;width:2px;height:34px;background:#31315a;"></div>
<div class="r" style="left:990px;top:903px;width:2px;height:34px;background:#31315a;"></div>
<div class="r" style="left:1018px;top:903px;width:2px;height:34px;background:#31315a;"></div>
<div class="r" style="left:1047px;top:903px;width:2px;height:34px;background:#31315a;"></div>
<div class="r" style="left:1076px;top:903px;width:2px;height:34px;background:#31315a;"></div>
<div class="r" style="left:1105px;top:903px;width:2px;height:34px;background:#31315a;"></div>
<div class="r" style="left:1135px;top:903px;width:2px;height:34px;background:#31315a;"></div>
<div class="r" style="left:1164px;top:903px;width:2px;height:34px;background:#31315a;"></div>
<div class="r" style="left:1193px;top:903px;width:2px;height:34px;background:#31315a;"></div>
<div class="r" style="left:1222px;top:903px;width:2px;height:34px;background:#31315a;"></div>
<div class="r" style="left:1250px;top:903px;width:2px;height:34px;background:#31315a;"></div>
<div class="r" style="left:1279px;top:903px;width:2px;height:34px;background:#31315a;"></div>
<div class="r" style="left:1308px;top:903px;width:2px;height:34px;background:#31315a;"></div>
<div class="r" style="left:1337px;top:903px;width:2px;height:34px;background:#31315a;"></div>
<div class="r" style="left:1366px;top:903px;width:2px;height:34px;background:#31315a;"></div>
<div class="r" style="left:1394px;top:903px;width:2px;height:34px;background:#31315a;"></div>
<div class="r" style="left:1423px;top:903px;width:2px;height:34px;background:#31315a;"></div>
<div class="r" style="left:1452px;top:903px;width:2px;height:34px;background:#31315a;"></div>
<div class="r" style="left:1481px;top:903px;width:2px;height:34px;background:#31315a;"></div>
<div class="r" style="left:1509px;top:903px;width:2px;height:34px;background:#31315a;"></div>
<div class="r" style="left:1538px;top:903px;width:2px;height:34px;background:#31315a;"></div>
<div class="r" style="left:1567px;top:903px;width:2px;height:34px;background:#31315a;"></div>
<div class="r" style="left:1596px;top:903px;width:2px;height:34px;background:#31315a;"></div>
<div class="r" style="left:1625px;top:903px;width:2px;height:34px;background:#31315a;"></div>
<div class="r" style="left:1653px;top:903px;width:2px;height:34px;background:#31315a;"></div>
<div class="r" style="left:1682px;top:903px;width:2px;height:34px;background:#31315a;"></div>
<div class="r" style="left:1711px;top:903px;width:2px;height:34px;background:#31315a;"></div>
<div class="r" style="left:1740px;top:903px;width:2px;height:34px;background:#31315a;"></div>
<div class="r" style="left:1769px;top:903px;width:2px;height:34px;background:#31315a;"></div>
<div class="r" style="left:1797px;top:903px;width:2px;height:34px;background:#31315a;"></div>
<div class="r" style="left:1826px;top:903px;width:2px;height:34px;background:#31315a;"></div>
<div class="r" style="left:1103px;top:903px;width:1px;height:34px;background:#2c2c52;"></div>
<div class="r" style="left:444px;top:905px;width:26px;height:30px;background:#554845;"></div>
<div class="r" style="left:472px;top:905px;width:27px;height:30px;background:#554845;"></div>
<div class="r" style="left:501px;top:905px;width:27px;height:30px;background:#554845;"></div>
<div class="r" style="left:530px;top:905px;width:27px;height:30px;background:#554845;"></div>
<div class="r" style="left:559px;top:905px;width:27px;height:30px;background:#554845;"></div>
<div class="r" style="left:588px;top:905px;width:27px;height:30px;background:#ff4444;"></div>
<div class="r" style="left:617px;top:905px;width:26px;height:30px;background:#ff4444;"></div>
<div class="r" style="left:645px;top:905px;width:27px;height:30px;background:#ff4444;"></div>
<div class="r" style="left:674px;top:905px;width:27px;height:30px;background:#ff4444;"></div>
<div class="r" style="left:703px;top:905px;width:27px;height:30px;background:#ff4444;"></div>
<div class="r" style="left:732px;top:905px;width:27px;height:30px;background:#ff4444;"></div>
<div class="r" style="left:761px;top:905px;width:27px;height:30px;background:#ff4444;"></div>
<div class="r" style="left:790px;top:905px;width:27px;height:30px;background:#55ff44;"></div>
<div class="r" style="left:819px;top:905px;width:26px;height:30px;background:#55ff44;"></div>
<div class="r" style="left:847px;top:905px;width:27px;height:30px;background:#55ff44;"></div>
<div class="r" style="left:876px;top:905px;width:27px;height:30px;background:#55ff44;"></div>
<div class="r" style="left:905px;top:905px;width:27px;height:30px;background:#5544ff;"></div>
<div class="r" style="left:934px;top:905px;width:27px;height:30px;background:#5544ff;"></div>
<div class="r" style="left:963px;top:905px;width:27px;height:30px;background:#5544ff;"></div>
<div class="r" style="left:1137px;top:905px;width:27px;height:30px;background:#554845;"></div>
<div class="r" style="left:1166px;top:905px;width:27px;height:30px;background:#554845;"></div>
<div class="r" style="left:1195px;top:905px;width:27px;height:30px;background:#554845;"></div>
<div class="r" style="left:1224px;top:905px;width:26px;height:30px;background:#554845;"></div>
<div class="r" style="left:1252px;top:905px;width:27px;height:30px;background:#554845;"></div>
<div class="r" style="left:1281px;top:905px;width:27px;height:30px;background:#ff4444;"></div>
<div class="r" style="left:1310px;top:905px;width:27px;height:30px;background:#ff4444;"></div>
<div class="r" style="left:1339px;top:905px;width:27px;height:30px;background:#ff4444;"></div>
<div class="r" style="left:1368px;top:905px;width:26px;height:30px;background:#ff4444;"></div>
<div class="r" style="left:1396px;top:905px;width:27px;height:30px;background:#ff4444;"></div>
<div class="r" style="left:1425px;top:905px;width:27px;height:30px;background:#ff4444;"></div>
<div class="r" style="left:1454px;top:905px;width:27px;height:30px;background:#ff4444;"></div>
<div class="r" style="left:1483px;top:905px;width:26px;height:30px;background:#55ff44;"></div>
<div class="r" style="left:1511px;top:905px;width:27px;height:30px;background:#55ff44;"></div>
<div class="r" style="left:1540px;top:905px;width:27px;height:30px;background:#55ff44;"></div>
<div class="r" style="left:1569px;top:905px;width:27px;height:30px;background:#55ff44;"></div>
<div class="r" style="left:1598px;top:905px;width:27px;height:30px;background:#5544ff;"></div>
<div class="r" style="left:1627px;top:905px;width:26px;height:30px;background:#5544ff;"></div>
<div class="r" style="left:1655px;top:905px;width:27px;height:30px;background:#5544ff;"></div>
<div class="r" style="left:414px;top:935px;width:1404px;height:1px;background:repeating-linear-gradient(90deg,#000 0 1px,transparent 1px 2px);"></div>
<div class="r" style="left:291px;top:937px;width:122px;height:1px;background:#36365a;"></div>
<div class="r" style="left:292px;top:940px;width:121px;height:1px;background:#29293f;"></div>
<div class="r" style="left:414px;top:937px;width:1404px;height:1px;background:#313156;"></div>
<div class="t" style="left:341.45px;top:950.52px;font-size:11.5px;line-height:11.5px;font-weight:bold;color:#9a9cb0;transform:scaleX(1.1040);">ab4</div>
<div class="r" style="left:414px;top:938px;width:1404px;height:35px;background:#222337;"></div>
<div class="r" style="left:414px;top:940px;width:1404px;height:1px;background:#2b2b4d;"></div>
<div class="r" style="left:413px;top:938px;width:2px;height:35px;background:#31315a;"></div>
<div class="r" style="left:442px;top:938px;width:2px;height:35px;background:#31315a;"></div>
<div class="r" style="left:470px;top:938px;width:2px;height:35px;background:#31315a;"></div>
<div class="r" style="left:499px;top:938px;width:2px;height:35px;background:#31315a;"></div>
<div class="r" style="left:528px;top:938px;width:2px;height:35px;background:#31315a;"></div>
<div class="r" style="left:557px;top:938px;width:2px;height:35px;background:#31315a;"></div>
<div class="r" style="left:586px;top:938px;width:2px;height:35px;background:#31315a;"></div>
<div class="r" style="left:615px;top:938px;width:2px;height:35px;background:#31315a;"></div>
<div class="r" style="left:643px;top:938px;width:2px;height:35px;background:#31315a;"></div>
<div class="r" style="left:672px;top:938px;width:2px;height:35px;background:#31315a;"></div>
<div class="r" style="left:701px;top:938px;width:2px;height:35px;background:#31315a;"></div>
<div class="r" style="left:730px;top:938px;width:2px;height:35px;background:#31315a;"></div>
<div class="r" style="left:759px;top:938px;width:2px;height:35px;background:#31315a;"></div>
<div class="r" style="left:788px;top:938px;width:2px;height:35px;background:#31315a;"></div>
<div class="r" style="left:817px;top:938px;width:2px;height:35px;background:#31315a;"></div>
<div class="r" style="left:845px;top:938px;width:2px;height:35px;background:#31315a;"></div>
<div class="r" style="left:874px;top:938px;width:2px;height:35px;background:#31315a;"></div>
<div class="r" style="left:903px;top:938px;width:2px;height:35px;background:#31315a;"></div>
<div class="r" style="left:932px;top:938px;width:2px;height:35px;background:#31315a;"></div>
<div class="r" style="left:961px;top:938px;width:2px;height:35px;background:#31315a;"></div>
<div class="r" style="left:990px;top:938px;width:2px;height:35px;background:#31315a;"></div>
<div class="r" style="left:1018px;top:938px;width:2px;height:35px;background:#31315a;"></div>
<div class="r" style="left:1047px;top:938px;width:2px;height:35px;background:#31315a;"></div>
<div class="r" style="left:1076px;top:938px;width:2px;height:35px;background:#31315a;"></div>
<div class="r" style="left:1105px;top:938px;width:2px;height:35px;background:#31315a;"></div>
<div class="r" style="left:1135px;top:938px;width:2px;height:35px;background:#31315a;"></div>
<div class="r" style="left:1164px;top:938px;width:2px;height:35px;background:#31315a;"></div>
<div class="r" style="left:1193px;top:938px;width:2px;height:35px;background:#31315a;"></div>
<div class="r" style="left:1222px;top:938px;width:2px;height:35px;background:#31315a;"></div>
<div class="r" style="left:1250px;top:938px;width:2px;height:35px;background:#31315a;"></div>
<div class="r" style="left:1279px;top:938px;width:2px;height:35px;background:#31315a;"></div>
<div class="r" style="left:1308px;top:938px;width:2px;height:35px;background:#31315a;"></div>
<div class="r" style="left:1337px;top:938px;width:2px;height:35px;background:#31315a;"></div>
<div class="r" style="left:1366px;top:938px;width:2px;height:35px;background:#31315a;"></div>
<div class="r" style="left:1394px;top:938px;width:2px;height:35px;background:#31315a;"></div>
<div class="r" style="left:1423px;top:938px;width:2px;height:35px;background:#31315a;"></div>
<div class="r" style="left:1452px;top:938px;width:2px;height:35px;background:#31315a;"></div>
<div class="r" style="left:1481px;top:938px;width:2px;height:35px;background:#31315a;"></div>
<div class="r" style="left:1509px;top:938px;width:2px;height:35px;background:#31315a;"></div>
<div class="r" style="left:1538px;top:938px;width:2px;height:35px;background:#31315a;"></div>
<div class="r" style="left:1567px;top:938px;width:2px;height:35px;background:#31315a;"></div>
<div class="r" style="left:1596px;top:938px;width:2px;height:35px;background:#31315a;"></div>
<div class="r" style="left:1625px;top:938px;width:2px;height:35px;background:#31315a;"></div>
<div class="r" style="left:1653px;top:938px;width:2px;height:35px;background:#31315a;"></div>
<div class="r" style="left:1682px;top:938px;width:2px;height:35px;background:#31315a;"></div>
<div class="r" style="left:1711px;top:938px;width:2px;height:35px;background:#31315a;"></div>
<div class="r" style="left:1740px;top:938px;width:2px;height:35px;background:#31315a;"></div>
<div class="r" style="left:1769px;top:938px;width:2px;height:35px;background:#31315a;"></div>
<div class="r" style="left:1797px;top:938px;width:2px;height:35px;background:#31315a;"></div>
<div class="r" style="left:1826px;top:938px;width:2px;height:35px;background:#31315a;"></div>
<div class="r" style="left:1103px;top:938px;width:1px;height:35px;background:#2c2c52;"></div>
<div class="r" style="left:414px;top:971px;width:1404px;height:1px;background:repeating-linear-gradient(90deg,#000 0 1px,transparent 1px 2px);"></div>
<div class="r" style="left:291px;top:973px;width:1527px;height:1px;background:#36365a;"></div>
</div>
<svg style="left:1900px;top:869px" width="40" height="40" viewBox="0 0 40 40"><defs><linearGradient id="bg1" x1="0" y1="0" x2="0" y2="1"><stop offset="0" stop-color="#3a9fb5"/><stop offset="1" stop-color="#8a9a98"/></linearGradient></defs><circle cx="20" cy="20" r="19.5" fill="#000" stroke="url(#bg1)" stroke-width="1"/><path d="M21 13.5 L14.5 20 L21 26.5" fill="none" stroke="#bdbdbd" stroke-width="2.6"/></svg>
<svg style="left:947px;top:182px" width="13" height="20" viewBox="0 0 13 20"><path d="M0.8 0.8 L0.8 16.6 L4.6 13.3 L7.1 18.4 L9.4 17.4 L7.1 12.6 L11.6 12.2 Z" fill="#fff" stroke="#000" stroke-width="1.1" stroke-linejoin="miter"/></svg>
</body></html>
